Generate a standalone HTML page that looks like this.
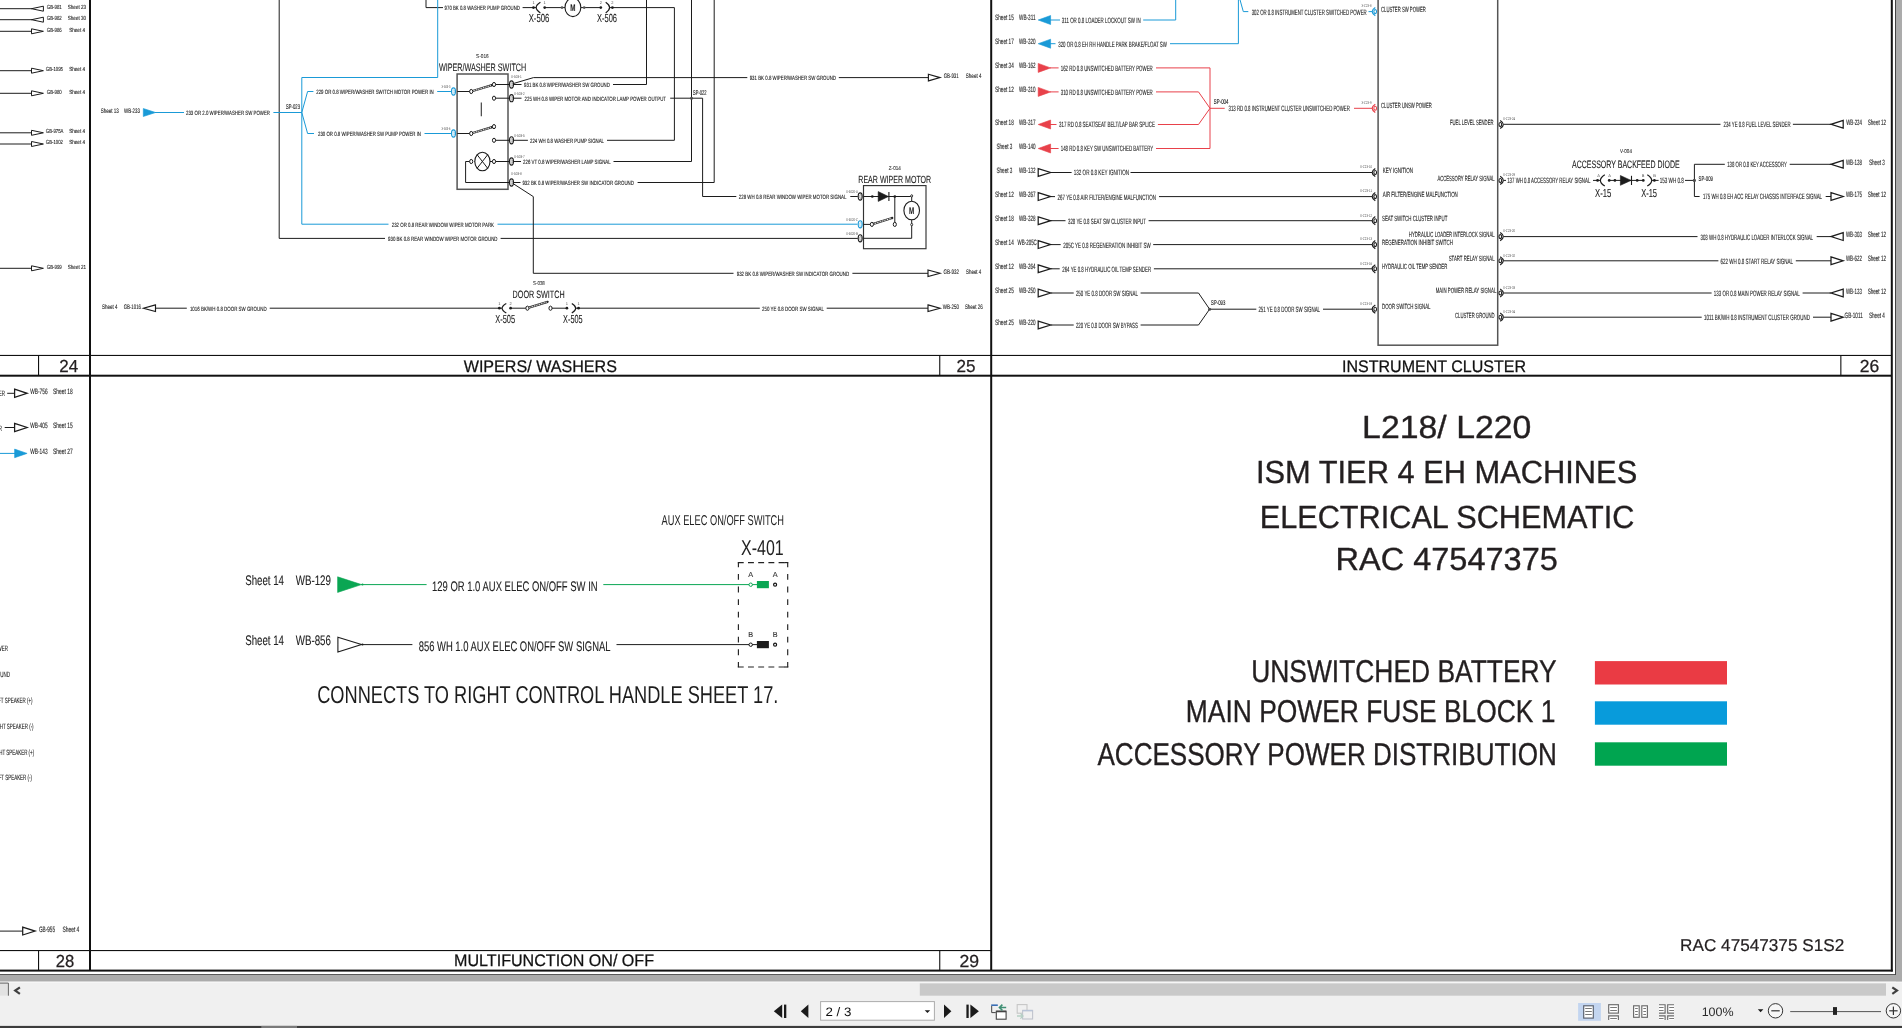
<!DOCTYPE html>
<html lang="en"><head><meta charset="utf-8"><title>L218/ L220 Electrical Schematic RAC 47547375</title>
<style>
html,body{margin:0;padding:0;background:#fff;overflow:hidden}
svg{display:block;font-family:"Liberation Sans",sans-serif;will-change:transform;-webkit-font-smoothing:antialiased;text-rendering:geometricPrecision}
</style></head><body>
<svg width="1902" height="1028" viewBox="0 0 1902 1028">
<rect x="0" y="0" width="1902" height="1028" fill="#fff"/>
<rect x="1896" y="0" width="6" height="982" fill="#ababab"/>
<rect x="0" y="975" width="1902" height="6.8" fill="#ababab"/>
<rect x="1895" y="0" width="1" height="975" fill="#454545"/>
<rect x="0" y="974.1" width="1896" height="0.9" fill="#454545"/>
<rect x="89" y="0" width="2" height="971" fill="#111"/>
<rect x="990.2" y="0" width="2" height="971" fill="#111"/>
<rect x="1890.8" y="0" width="2" height="971.5" fill="#111"/>
<rect x="0" y="374.7" width="1892" height="2.0" fill="#111"/>
<rect x="0" y="969.6" width="1892.8" height="2" fill="#111"/>
<rect x="0" y="354.9" width="1892" height="1.1" fill="#111"/>
<rect x="0" y="950" width="991" height="1.1" fill="#111"/>
<rect x="38" y="355" width="1.1" height="20" fill="#111"/>
<rect x="939.2" y="355" width="1.1" height="20" fill="#111"/>
<rect x="1840.3" y="355" width="1.1" height="20" fill="#111"/>
<rect x="38" y="950" width="1.1" height="20" fill="#111"/>
<rect x="939.2" y="950" width="1.1" height="20" fill="#111"/>
<text x="59.2" y="372.0" font-size="17.4" fill="#231f20" textLength="18.9" lengthAdjust="spacingAndGlyphs" stroke="#231f20" stroke-width="0.25">24</text>
<text x="956.5" y="372.0" font-size="17.4" fill="#231f20" textLength="19.0" lengthAdjust="spacingAndGlyphs" stroke="#231f20" stroke-width="0.25">25</text>
<text x="1859.7" y="372.0" font-size="17.4" fill="#231f20" textLength="19.5" lengthAdjust="spacingAndGlyphs" stroke="#231f20" stroke-width="0.25">26</text>
<text x="55.7" y="967.0" font-size="17.4" fill="#231f20" textLength="18.5" lengthAdjust="spacingAndGlyphs" stroke="#231f20" stroke-width="0.25">28</text>
<text x="959.4" y="967.0" font-size="17.4" fill="#231f20" textLength="19.6" lengthAdjust="spacingAndGlyphs" stroke="#231f20" stroke-width="0.25">29</text>
<text x="463.7" y="371.7" font-size="16.7" fill="#111" textLength="153.3" lengthAdjust="spacingAndGlyphs" stroke="#111" stroke-width="0.25">WIPERS/ WASHERS</text>
<text x="1342.0" y="371.7" font-size="16.7" fill="#111" textLength="184.0" lengthAdjust="spacingAndGlyphs" stroke="#111" stroke-width="0.25">INSTRUMENT CLUSTER</text>
<text x="454.1" y="965.9" font-size="16.7" fill="#111" textLength="199.9" lengthAdjust="spacingAndGlyphs" stroke="#111" stroke-width="0.25">MULTIFUNCTION ON/ OFF</text>
<path d="M0.0 8.7L32.0 8.7" stroke="#1c1c1c" stroke-width="1.0" fill="none"/>
<path d="M43.4 6.2L31.5 8.7L43.4 11.2Z" fill="#fff" stroke="#1c1c1c" stroke-width="1.0"/>
<text x="46.8" y="8.9" font-size="5.9" fill="#1e1e1e" textLength="15.0" lengthAdjust="spacingAndGlyphs" stroke="#1e1e1e" stroke-width="0.12">GB-981</text>
<text x="67.8" y="8.9" font-size="5.9" fill="#1e1e1e" textLength="18.2" lengthAdjust="spacingAndGlyphs" stroke="#1e1e1e" stroke-width="0.12">Sheet 23</text>
<path d="M0.0 19.7L32.0 19.7" stroke="#1c1c1c" stroke-width="1.0" fill="none"/>
<path d="M43.4 17.2L31.5 19.7L43.4 22.2Z" fill="#fff" stroke="#1c1c1c" stroke-width="1.0"/>
<text x="46.8" y="19.9" font-size="5.9" fill="#1e1e1e" textLength="15.0" lengthAdjust="spacingAndGlyphs" stroke="#1e1e1e" stroke-width="0.12">GB-982</text>
<text x="67.8" y="19.9" font-size="5.9" fill="#1e1e1e" textLength="18.2" lengthAdjust="spacingAndGlyphs" stroke="#1e1e1e" stroke-width="0.12">Sheet 30</text>
<path d="M0.0 31.3L32.0 31.3" stroke="#1c1c1c" stroke-width="1.0" fill="none"/>
<path d="M31.5 28.8L43.4 31.3L31.5 33.8Z" fill="#fff" stroke="#1c1c1c" stroke-width="1.0"/>
<text x="46.8" y="31.5" font-size="5.9" fill="#1e1e1e" textLength="15.0" lengthAdjust="spacingAndGlyphs" stroke="#1e1e1e" stroke-width="0.12">GB-986</text>
<text x="69.2" y="31.5" font-size="5.9" fill="#1e1e1e" textLength="15.8" lengthAdjust="spacingAndGlyphs" stroke="#1e1e1e" stroke-width="0.12">Sheet 4</text>
<path d="M0.0 70.7L32.0 70.7" stroke="#1c1c1c" stroke-width="1.0" fill="none"/>
<path d="M31.5 68.2L43.4 70.7L31.5 73.2Z" fill="#fff" stroke="#1c1c1c" stroke-width="1.0"/>
<text x="45.8" y="70.9" font-size="5.9" fill="#1e1e1e" textLength="17.2" lengthAdjust="spacingAndGlyphs" stroke="#1e1e1e" stroke-width="0.12">GB-1095</text>
<text x="69.2" y="70.9" font-size="5.9" fill="#1e1e1e" textLength="15.8" lengthAdjust="spacingAndGlyphs" stroke="#1e1e1e" stroke-width="0.12">Sheet 4</text>
<path d="M0.0 93.3L32.0 93.3" stroke="#1c1c1c" stroke-width="1.0" fill="none"/>
<path d="M31.5 90.8L43.4 93.3L31.5 95.8Z" fill="#fff" stroke="#1c1c1c" stroke-width="1.0"/>
<text x="46.8" y="93.5" font-size="5.9" fill="#1e1e1e" textLength="15.0" lengthAdjust="spacingAndGlyphs" stroke="#1e1e1e" stroke-width="0.12">GB-980</text>
<text x="69.2" y="93.5" font-size="5.9" fill="#1e1e1e" textLength="15.8" lengthAdjust="spacingAndGlyphs" stroke="#1e1e1e" stroke-width="0.12">Sheet 4</text>
<path d="M0.0 132.8L32.0 132.8" stroke="#1c1c1c" stroke-width="1.0" fill="none"/>
<path d="M31.5 130.3L43.4 132.8L31.5 135.3Z" fill="#fff" stroke="#1c1c1c" stroke-width="1.0"/>
<text x="45.8" y="133.0" font-size="5.9" fill="#1e1e1e" textLength="17.6" lengthAdjust="spacingAndGlyphs" stroke="#1e1e1e" stroke-width="0.12">GB-975A</text>
<text x="69.2" y="133.0" font-size="5.9" fill="#1e1e1e" textLength="15.8" lengthAdjust="spacingAndGlyphs" stroke="#1e1e1e" stroke-width="0.12">Sheet 4</text>
<path d="M0.0 144.0L32.0 144.0" stroke="#1c1c1c" stroke-width="1.0" fill="none"/>
<path d="M31.5 141.5L43.4 144.0L31.5 146.5Z" fill="#fff" stroke="#1c1c1c" stroke-width="1.0"/>
<text x="45.8" y="144.2" font-size="5.9" fill="#1e1e1e" textLength="17.2" lengthAdjust="spacingAndGlyphs" stroke="#1e1e1e" stroke-width="0.12">GB-1002</text>
<text x="69.2" y="144.2" font-size="5.9" fill="#1e1e1e" textLength="15.8" lengthAdjust="spacingAndGlyphs" stroke="#1e1e1e" stroke-width="0.12">Sheet 4</text>
<path d="M0.0 268.3L32.0 268.3" stroke="#1c1c1c" stroke-width="1.0" fill="none"/>
<path d="M31.5 265.8L43.4 268.3L31.5 270.8Z" fill="#fff" stroke="#1c1c1c" stroke-width="1.0"/>
<text x="46.8" y="268.5" font-size="5.9" fill="#1e1e1e" textLength="15.0" lengthAdjust="spacingAndGlyphs" stroke="#1e1e1e" stroke-width="0.12">GB-999</text>
<text x="67.8" y="268.5" font-size="5.9" fill="#1e1e1e" textLength="18.2" lengthAdjust="spacingAndGlyphs" stroke="#1e1e1e" stroke-width="0.12">Sheet 21</text>
<path d="M279.2 0.0L279.2 238.4L385.0 238.4" stroke="#1c1c1c" stroke-width="1.0" fill="none" stroke-linejoin="miter"/>
<path d="M500.6 238.4L857.8 238.4" stroke="#1c1c1c" stroke-width="1.0" fill="none"/>
<path d="M426.0 0.0L426.0 7.6L443.0 7.6" stroke="#1c1c1c" stroke-width="1.0" fill="none" stroke-linejoin="miter"/>
<text x="444.6" y="9.9" font-size="6.2" fill="#1e1e1e" textLength="75.3" lengthAdjust="spacingAndGlyphs" stroke="#1e1e1e" stroke-width="0.12">970 BK 0.8 WASHER PUMP GROUND</text>
<path d="M522.6 7.6L533.5 7.6" stroke="#1c1c1c" stroke-width="1.0" fill="none"/>
<text x="388.0" y="240.7" font-size="6.2" fill="#1e1e1e" textLength="109.5" lengthAdjust="spacingAndGlyphs" stroke="#1e1e1e" stroke-width="0.12">930 BK 0.8 REAR WINDOW WIPER MOTOR GROUND</text>
<circle cx="533.5" cy="7.6" r="1.35" fill="#1c1c1c"/>
<path d="M540.4 2.3Q532.0 7.6 540.4 12.9" stroke="#1c1c1c" stroke-width="1.2" fill="none"/>
<circle cx="544.7" cy="7.6" r="1.35" fill="#1c1c1c"/>
<path d="M532.0 7.6L536.1 7.6" stroke="#1c1c1c" stroke-width="1.0" fill="none"/>
<text x="533.5" y="4.4" font-size="4.0" fill="#4a4a4a" text-anchor="middle">1</text>
<text x="544.7" y="4.4" font-size="4.0" fill="#4a4a4a" text-anchor="middle">1</text>
<path d="M544.7 7.6L565.0 7.6" stroke="#1c1c1c" stroke-width="1.0" fill="none"/>
<circle cx="562.0" cy="7.6" r="1.35" fill="#555"/>
<ellipse cx="572.9" cy="7.4" rx="7.9" ry="9.2" fill="#fff" stroke="#1c1c1c" stroke-width="1.1"/>
<text x="570.3" y="11.0" font-size="9.6" fill="#1c1c1c" textLength="5.2" lengthAdjust="spacingAndGlyphs" font-weight="bold" stroke="#1c1c1c" stroke-width="0.1">M</text>
<path d="M581.0 7.6L600.8 7.6" stroke="#1c1c1c" stroke-width="1.0" fill="none"/>
<circle cx="584.2" cy="7.6" r="1.35" fill="#555"/>
<circle cx="600.8" cy="7.6" r="1.35" fill="#1c1c1c"/>
<path d="M605.7 2.3Q613.5 7.6 605.7 12.9" stroke="#1c1c1c" stroke-width="1.2" fill="none"/>
<circle cx="612.4" cy="7.6" r="1.35" fill="#1c1c1c"/>
<path d="M609.8 7.6L613.8 7.6" stroke="#1c1c1c" stroke-width="1.0" fill="none"/>
<text x="600.8" y="4.4" font-size="4.0" fill="#4a4a4a" text-anchor="middle">2</text>
<text x="612.4" y="4.4" font-size="4.0" fill="#4a4a4a" text-anchor="middle">2</text>
<path d="M612.4 7.6L674.4 7.6L674.4 140.3L607.0 140.3" stroke="#1c1c1c" stroke-width="1.0" fill="none" stroke-linejoin="miter"/>
<text x="528.7" y="22.0" font-size="11.7" fill="#1e1e1e" textLength="20.6" lengthAdjust="spacingAndGlyphs" stroke="#1e1e1e" stroke-width="0.1">X-506</text>
<text x="597.0" y="22.0" font-size="11.7" fill="#1e1e1e" textLength="20.0" lengthAdjust="spacingAndGlyphs" stroke="#1e1e1e" stroke-width="0.1">X-506</text>
<path d="M646.5 0.0L646.5 84.5L613.0 84.5" stroke="#1c1c1c" stroke-width="1.0" fill="none" stroke-linejoin="miter"/>
<path d="M691.5 0.0L691.5 161.5L613.5 161.5" stroke="#1c1c1c" stroke-width="1.0" fill="none" stroke-linejoin="miter"/>
<path d="M714.2 0.0L714.2 182.5L637.6 182.5" stroke="#1c1c1c" stroke-width="1.0" fill="none" stroke-linejoin="miter"/>
<text x="100.7" y="112.7" font-size="6.6" fill="#1e1e1e" textLength="18.2" lengthAdjust="spacingAndGlyphs" stroke="#1e1e1e" stroke-width="0.12">Sheet 13</text>
<text x="124.0" y="112.7" font-size="6.6" fill="#1e1e1e" textLength="16.0" lengthAdjust="spacingAndGlyphs" stroke="#1e1e1e" stroke-width="0.12">WB-233</text>
<path d="M143.3 108.5L155.6 112.5L143.3 116.5Z" fill="#1a9ad7" stroke="#1a9ad7" stroke-width="0.6"/>
<path d="M155.0 112.5L184.0 112.5" stroke="#1a9ad7" stroke-width="1.0" fill="none"/>
<text x="186.0" y="114.8" font-size="6.2" fill="#1e1e1e" textLength="84.0" lengthAdjust="spacingAndGlyphs" stroke="#1e1e1e" stroke-width="0.12">233 OR 2.0 WIPER/WASHER SW POWER</text>
<path d="M273.4 112.5L301.8 112.5" stroke="#1a9ad7" stroke-width="1.0" fill="none"/>
<text x="286.0" y="109.3" font-size="6.8" fill="#1e1e1e" textLength="14.0" lengthAdjust="spacingAndGlyphs" stroke="#1e1e1e" stroke-width="0.12">SP-023</text>
<path d="M437.7 0.0L437.7 77.5L301.8 77.5L301.8 224.2L388.5 224.2" stroke="#1a9ad7" stroke-width="1.0" fill="none" stroke-linejoin="miter"/>
<path d="M497.5 224.2L857.5 224.2" stroke="#1a9ad7" stroke-width="1.0" fill="none"/>
<text x="391.7" y="226.5" font-size="6.2" fill="#1e1e1e" textLength="102.3" lengthAdjust="spacingAndGlyphs" stroke="#1e1e1e" stroke-width="0.12">232 OR 0.8 REAR WINDOW WIPER MOTOR PARK</text>
<path d="M301.8 112.5L307.6 91.5L313.4 91.5" stroke="#1a9ad7" stroke-width="1.0" fill="none" stroke-linejoin="miter"/>
<path d="M301.8 112.5L307.6 133.5L314.0 133.5" stroke="#1a9ad7" stroke-width="1.0" fill="none" stroke-linejoin="miter"/>
<text x="316.2" y="93.8" font-size="6.2" fill="#1e1e1e" textLength="117.6" lengthAdjust="spacingAndGlyphs" stroke="#1e1e1e" stroke-width="0.12">229 OR 0.8 WIPER/WASHER SWITCH MOTOR POWER IN</text>
<text x="318.0" y="135.8" font-size="6.2" fill="#1e1e1e" textLength="103.0" lengthAdjust="spacingAndGlyphs" stroke="#1e1e1e" stroke-width="0.12">230 OR 0.8 WIPER/WASHER SW PUMP POWER IN</text>
<path d="M437.2 91.5L451.0 91.5" stroke="#1a9ad7" stroke-width="1.0" fill="none"/>
<path d="M424.5 133.5L451.0 133.5" stroke="#1a9ad7" stroke-width="1.0" fill="none"/>
<text x="476.1" y="57.6" font-size="5.6" fill="#444" textLength="12.6" lengthAdjust="spacingAndGlyphs" stroke="#444" stroke-width="0.12">S-016</text>
<text x="438.9" y="71.0" font-size="10.8" fill="#222" textLength="87.3" lengthAdjust="spacingAndGlyphs" stroke="#222" stroke-width="0.1">WIPER/WASHER SWITCH</text>
<rect x="457.1" y="74" width="50.9" height="115.3" fill="none" stroke="#555" stroke-width="1.5"/>
<text x="441.5" y="87.8" font-size="4.0" fill="#4a4a4a" textLength="9.0" lengthAdjust="spacingAndGlyphs">X-503-3</text>
<text x="441.5" y="129.8" font-size="4.0" fill="#4a4a4a" textLength="9.0" lengthAdjust="spacingAndGlyphs">X-503-6</text>
<path d="M457.2 91.5L470.0 91.5" stroke="#1c1c1c" stroke-width="1.0" fill="none"/>
<path d="M472.6 91.0L492.0 85.2" stroke="#303030" stroke-width="2.3" fill="none"/>
<path d="M472.6 91.0L492.0 85.2" stroke="#fff" stroke-width="1.0" stroke-dasharray="1.1 0.7" fill="none"/>
<circle cx="492.0" cy="85.2" r="1.15" fill="#262626"/>
<path d="M495.0 84.5L509.0 84.5" stroke="#1c1c1c" stroke-width="1.0" fill="none"/>
<path d="M495.0 98.2L509.0 98.2" stroke="#1c1c1c" stroke-width="1.0" fill="none"/>
<ellipse cx="471.2" cy="91.5" rx="1.55" ry="2.1" fill="#fff" stroke="#1c1c1c" stroke-width="1.0"/>
<ellipse cx="494.0" cy="84.5" rx="1.55" ry="2.1" fill="#fff" stroke="#1c1c1c" stroke-width="1.0"/>
<ellipse cx="494.0" cy="98.2" rx="1.55" ry="2.1" fill="#fff" stroke="#1c1c1c" stroke-width="1.0"/>
<path d="M481.3 102.4L481.3 116.3" stroke="#333" stroke-width="1.1" fill="none"/>
<path d="M457.2 133.5L470.0 133.5" stroke="#1c1c1c" stroke-width="1.0" fill="none"/>
<path d="M472.6 133.0L492.0 127.2" stroke="#303030" stroke-width="2.3" fill="none"/>
<path d="M472.6 133.0L492.0 127.2" stroke="#fff" stroke-width="1.0" stroke-dasharray="1.1 0.7" fill="none"/>
<circle cx="492.0" cy="127.2" r="1.15" fill="#262626"/>
<path d="M495.0 140.3L509.0 140.3" stroke="#1c1c1c" stroke-width="1.0" fill="none"/>
<ellipse cx="471.2" cy="133.5" rx="1.55" ry="2.1" fill="#fff" stroke="#1c1c1c" stroke-width="1.0"/>
<ellipse cx="494.0" cy="126.6" rx="1.55" ry="2.1" fill="#fff" stroke="#1c1c1c" stroke-width="1.0"/>
<ellipse cx="494.0" cy="140.3" rx="1.55" ry="2.1" fill="#fff" stroke="#1c1c1c" stroke-width="1.0"/>
<path d="M469.8 161.5L465.6 161.5L465.6 182.5L509.0 182.5" stroke="#1c1c1c" stroke-width="1.0" fill="none" stroke-linejoin="miter"/>
<path d="M474.5 161.5L492.5 161.5" stroke="#1c1c1c" stroke-width="1.0" fill="none"/>
<path d="M495.0 161.5L509.0 161.5" stroke="#1c1c1c" stroke-width="1.0" fill="none"/>
<ellipse cx="482.4" cy="161.5" rx="7.6" ry="9.3" fill="#fff" stroke="#1c1c1c" stroke-width="1.1"/>
<path d="M477.2 154.8L487.6 168.2" stroke="#1c1c1c" stroke-width="1.0" fill="none"/>
<path d="M487.6 154.8L477.2 168.2" stroke="#1c1c1c" stroke-width="1.0" fill="none"/>
<ellipse cx="471.2" cy="161.5" rx="1.55" ry="2.1" fill="#fff" stroke="#1c1c1c" stroke-width="1.0"/>
<ellipse cx="494.0" cy="161.5" rx="1.55" ry="2.1" fill="#fff" stroke="#1c1c1c" stroke-width="1.0"/>
<ellipse cx="453.5" cy="91.5" rx="2.0" ry="3.6" fill="#fff" stroke="#1a9ad7" stroke-width="1.1"/>
<ellipse cx="453.8" cy="91.5" rx="0.8" ry="2.0" fill="none" stroke="#1a9ad7" stroke-width="0.55" stroke-opacity="0.6"/>
<ellipse cx="453.5" cy="133.5" rx="2.0" ry="3.6" fill="#fff" stroke="#1a9ad7" stroke-width="1.1"/>
<ellipse cx="453.8" cy="133.5" rx="0.8" ry="2.0" fill="none" stroke="#1a9ad7" stroke-width="0.55" stroke-opacity="0.6"/>
<path d="M514.0 84.5L521.5 84.5" stroke="#1c1c1c" stroke-width="1.0" fill="none"/>
<path d="M512.5 83.8L533.5 77.6L747.3 77.6" stroke="#1c1c1c" stroke-width="1.0" fill="none" stroke-linejoin="miter"/>
<text x="524.1" y="87.0" font-size="6.2" fill="#1e1e1e" textLength="85.8" lengthAdjust="spacingAndGlyphs" stroke="#1e1e1e" stroke-width="0.12">931 BK 0.8 WIPER/WASHER SW GROUND</text>
<path d="M514.0 98.2L521.5 98.2" stroke="#1c1c1c" stroke-width="1.0" fill="none"/>
<text x="524.5" y="100.6" font-size="6.2" fill="#1e1e1e" textLength="141.5" lengthAdjust="spacingAndGlyphs" stroke="#1e1e1e" stroke-width="0.12">225 WH 0.8 WIPER MOTOR AND INDICATOR LAMP POWER OUTPUT</text>
<path d="M670.2 98.2L702.6 98.2L702.6 196.5L736.3 196.5" stroke="#1c1c1c" stroke-width="1.0" fill="none" stroke-linejoin="miter"/>
<circle cx="691.5" cy="98.2" r="1.5" fill="#4a4a4a"/>
<text x="693.0" y="95.3" font-size="6.8" fill="#1e1e1e" textLength="13.6" lengthAdjust="spacingAndGlyphs" stroke="#1e1e1e" stroke-width="0.12">SP-022</text>
<path d="M514.0 140.3L527.9 140.3" stroke="#1c1c1c" stroke-width="1.0" fill="none"/>
<text x="530.0" y="142.7" font-size="6.2" fill="#1e1e1e" textLength="74.0" lengthAdjust="spacingAndGlyphs" stroke="#1e1e1e" stroke-width="0.12">224 WH 0.8 WASHER PUMP SIGNAL</text>
<path d="M514.0 161.5L521.0 161.5" stroke="#1c1c1c" stroke-width="1.0" fill="none"/>
<text x="523.0" y="163.9" font-size="6.2" fill="#1e1e1e" textLength="87.7" lengthAdjust="spacingAndGlyphs" stroke="#1e1e1e" stroke-width="0.12">226 VT 0.8 WIPER/WASHER LAMP SIGNAL</text>
<path d="M514.0 182.5L520.5 182.5" stroke="#1c1c1c" stroke-width="1.0" fill="none"/>
<text x="522.4" y="184.9" font-size="6.2" fill="#1e1e1e" textLength="111.5" lengthAdjust="spacingAndGlyphs" stroke="#1e1e1e" stroke-width="0.12">932 BK 0.8 WIPER/WASHER SW INDICATOR GROUND</text>
<path d="M512.5 183.2L533.3 196.6L533.3 273.3L733.5 273.3" stroke="#1c1c1c" stroke-width="1.0" fill="none" stroke-linejoin="miter"/>
<ellipse cx="511.5" cy="84.5" rx="2.0" ry="3.6" fill="#fff" stroke="#1c1c1c" stroke-width="1.1"/>
<ellipse cx="511.8" cy="84.5" rx="0.8" ry="2.0" fill="none" stroke="#1c1c1c" stroke-width="0.55" stroke-opacity="0.6"/>
<ellipse cx="511.5" cy="98.2" rx="2.0" ry="3.6" fill="#fff" stroke="#1c1c1c" stroke-width="1.1"/>
<ellipse cx="511.8" cy="98.2" rx="0.8" ry="2.0" fill="none" stroke="#1c1c1c" stroke-width="0.55" stroke-opacity="0.6"/>
<ellipse cx="511.5" cy="140.3" rx="2.0" ry="3.6" fill="#fff" stroke="#1c1c1c" stroke-width="1.1"/>
<ellipse cx="511.8" cy="140.3" rx="0.8" ry="2.0" fill="none" stroke="#1c1c1c" stroke-width="0.55" stroke-opacity="0.6"/>
<ellipse cx="511.5" cy="161.5" rx="2.0" ry="3.6" fill="#fff" stroke="#1c1c1c" stroke-width="1.1"/>
<ellipse cx="511.8" cy="161.5" rx="0.8" ry="2.0" fill="none" stroke="#1c1c1c" stroke-width="0.55" stroke-opacity="0.6"/>
<ellipse cx="511.5" cy="182.5" rx="2.0" ry="3.6" fill="#fff" stroke="#1c1c1c" stroke-width="1.1"/>
<ellipse cx="511.8" cy="182.5" rx="0.8" ry="2.0" fill="none" stroke="#1c1c1c" stroke-width="0.55" stroke-opacity="0.6"/>
<text x="511.0" y="77.7" font-size="4.0" fill="#4a4a4a" textLength="10.8" lengthAdjust="spacingAndGlyphs">X-503-1</text>
<text x="514.0" y="94.8" font-size="4.0" fill="#4a4a4a" textLength="10.8" lengthAdjust="spacingAndGlyphs">X-503-2</text>
<text x="514.0" y="136.8" font-size="4.0" fill="#4a4a4a" textLength="10.8" lengthAdjust="spacingAndGlyphs">X-503-5</text>
<text x="514.0" y="157.9" font-size="4.0" fill="#4a4a4a" textLength="10.8" lengthAdjust="spacingAndGlyphs">X-503-7</text>
<text x="511.0" y="175.4" font-size="4.0" fill="#4a4a4a" textLength="10.8" lengthAdjust="spacingAndGlyphs">X-503-8</text>
<text x="749.7" y="80.0" font-size="6.2" fill="#1e1e1e" textLength="86.3" lengthAdjust="spacingAndGlyphs" stroke="#1e1e1e" stroke-width="0.12">931 BK 0.8 WIPER/WASHER SW GROUND</text>
<path d="M838.8 77.6L928.4 77.6" stroke="#1c1c1c" stroke-width="1.0" fill="none"/>
<path d="M928.4 74.3L940.0 77.6L928.4 80.9Z" fill="#fff" stroke="#1c1c1c" stroke-width="1.15"/>
<text x="943.7" y="78.0" font-size="6.6" fill="#1e1e1e" textLength="15.0" lengthAdjust="spacingAndGlyphs" stroke="#1e1e1e" stroke-width="0.12">GB-931</text>
<text x="965.8" y="78.0" font-size="6.6" fill="#1e1e1e" textLength="15.7" lengthAdjust="spacingAndGlyphs" stroke="#1e1e1e" stroke-width="0.12">Sheet 4</text>
<text x="738.8" y="198.9" font-size="6.2" fill="#1e1e1e" textLength="107.7" lengthAdjust="spacingAndGlyphs" stroke="#1e1e1e" stroke-width="0.12">228 WH 0.8 REAR WINDOW WIPER MOTOR SIGNAL</text>
<path d="M850.3 196.5L857.8 196.5" stroke="#1c1c1c" stroke-width="1.0" fill="none"/>
<text x="888.8" y="169.5" font-size="5.6" fill="#444" textLength="12.0" lengthAdjust="spacingAndGlyphs" stroke="#444" stroke-width="0.12">Z-014</text>
<text x="858.3" y="182.6" font-size="10.3" fill="#222" textLength="72.9" lengthAdjust="spacingAndGlyphs" stroke="#222" stroke-width="0.1">REAR WIPER MOTOR</text>
<rect x="863.5" y="185.6" width="62.5" height="63.1" fill="none" stroke="#333" stroke-width="1.15"/>
<path d="M863.5 196.5L911.7 196.5" stroke="#1c1c1c" stroke-width="1.0" fill="none"/>
<circle cx="872.3" cy="196.5" r="1.35" fill="#1c1c1c"/>
<path d="M878.2 191.6L888.4 196.5L878.2 201.4Z" fill="#1c1c1c" stroke="#1c1c1c" stroke-width="0.6"/>
<path d="M888.9 192.0L888.9 201.0" stroke="#1c1c1c" stroke-width="1.1" fill="none"/>
<circle cx="894.8" cy="196.5" r="1.35" fill="#1c1c1c"/>
<path d="M894.8 196.5L894.8 222.5" stroke="#1c1c1c" stroke-width="1.0" fill="none"/>
<path d="M911.7 196.5L911.7 201.2" stroke="#1c1c1c" stroke-width="1.0" fill="none"/>
<ellipse cx="911.7" cy="210.5" rx="7.8" ry="9.3" fill="#fff" stroke="#1c1c1c" stroke-width="1.1"/>
<text x="909.1" y="213.9" font-size="9.6" fill="#1c1c1c" textLength="5.2" lengthAdjust="spacingAndGlyphs" font-weight="bold" stroke="#1c1c1c" stroke-width="0.1">M</text>
<path d="M911.7 219.8L911.7 238.3L863.5 238.3" stroke="#1c1c1c" stroke-width="1.0" fill="none" stroke-linejoin="miter"/>
<ellipse cx="911.7" cy="195.9" rx="1.0" ry="1.2" fill="#fff" stroke="#333" stroke-width="1.0"/>
<ellipse cx="911.7" cy="224.6" rx="1.0" ry="1.2" fill="#fff" stroke="#333" stroke-width="1.0"/>
<path d="M863.5 224.4L870.4 224.4" stroke="#1c1c1c" stroke-width="1.0" fill="none"/>
<path d="M873.3 223.9L892.2 218.0" stroke="#303030" stroke-width="2.3" fill="none"/>
<path d="M873.3 223.9L892.2 218.0" stroke="#fff" stroke-width="1.0" stroke-dasharray="1.1 0.7" fill="none"/>
<circle cx="892.2" cy="218.0" r="1.15" fill="#262626"/>
<ellipse cx="871.9" cy="224.4" rx="1.55" ry="2.1" fill="#fff" stroke="#1c1c1c" stroke-width="1.0"/>
<ellipse cx="894.8" cy="224.4" rx="1.55" ry="2.1" fill="#fff" stroke="#1c1c1c" stroke-width="1.0"/>
<ellipse cx="860.2" cy="196.5" rx="2.0" ry="3.6" fill="#fff" stroke="#1c1c1c" stroke-width="1.1"/>
<ellipse cx="860.5" cy="196.5" rx="0.8" ry="2.0" fill="none" stroke="#1c1c1c" stroke-width="0.55" stroke-opacity="0.6"/>
<ellipse cx="860.2" cy="224.3" rx="2.0" ry="3.6" fill="#fff" stroke="#1a9ad7" stroke-width="1.1"/>
<ellipse cx="860.5" cy="224.3" rx="0.8" ry="2.0" fill="none" stroke="#1a9ad7" stroke-width="0.55" stroke-opacity="0.6"/>
<ellipse cx="860.2" cy="238.3" rx="2.0" ry="3.6" fill="#fff" stroke="#1c1c1c" stroke-width="1.1"/>
<ellipse cx="860.5" cy="238.3" rx="0.8" ry="2.0" fill="none" stroke="#1c1c1c" stroke-width="0.55" stroke-opacity="0.6"/>
<text x="846.0" y="192.7" font-size="4.0" fill="#4a4a4a" textLength="12.0" lengthAdjust="spacingAndGlyphs">X-5020-A</text>
<text x="846.0" y="220.7" font-size="4.0" fill="#4a4a4a" textLength="12.0" lengthAdjust="spacingAndGlyphs">X-5020-C</text>
<text x="846.0" y="234.7" font-size="4.0" fill="#4a4a4a" textLength="12.0" lengthAdjust="spacingAndGlyphs">X-5020-B</text>
<text x="736.7" y="275.7" font-size="6.2" fill="#1e1e1e" textLength="112.5" lengthAdjust="spacingAndGlyphs" stroke="#1e1e1e" stroke-width="0.12">932 BK 0.8 WIPER/WASHER SW INDICATOR GROUND</text>
<path d="M852.4 273.3L928.0 273.3" stroke="#1c1c1c" stroke-width="1.0" fill="none"/>
<path d="M928.0 270.0L940.0 273.3L928.0 276.6Z" fill="#fff" stroke="#1c1c1c" stroke-width="1.15"/>
<text x="943.4" y="273.7" font-size="6.6" fill="#1e1e1e" textLength="15.6" lengthAdjust="spacingAndGlyphs" stroke="#1e1e1e" stroke-width="0.12">GB-932</text>
<text x="966.0" y="273.7" font-size="6.6" fill="#1e1e1e" textLength="15.3" lengthAdjust="spacingAndGlyphs" stroke="#1e1e1e" stroke-width="0.12">Sheet 4</text>
<text x="101.9" y="308.6" font-size="6.6" fill="#1e1e1e" textLength="15.5" lengthAdjust="spacingAndGlyphs" stroke="#1e1e1e" stroke-width="0.12">Sheet 4</text>
<text x="123.7" y="308.6" font-size="6.6" fill="#1e1e1e" textLength="17.3" lengthAdjust="spacingAndGlyphs" stroke="#1e1e1e" stroke-width="0.12">GB-1016</text>
<path d="M155.5 304.9L143.5 308.2L155.5 311.5Z" fill="#fff" stroke="#1c1c1c" stroke-width="1.15"/>
<path d="M155.5 308.2L186.8 308.2" stroke="#1c1c1c" stroke-width="1.0" fill="none"/>
<text x="189.9" y="310.6" font-size="6.2" fill="#1e1e1e" textLength="76.7" lengthAdjust="spacingAndGlyphs" stroke="#1e1e1e" stroke-width="0.12">1016 BK/WH 0.8 DOOR SW GROUND</text>
<path d="M269.7 308.2L499.4 308.2" stroke="#1c1c1c" stroke-width="1.0" fill="none"/>
<circle cx="499.4" cy="308.2" r="1.35" fill="#1c1c1c"/>
<path d="M506.3 303.4Q497.9 308.2 506.3 313.0" stroke="#1c1c1c" stroke-width="1.2" fill="none"/>
<circle cx="510.6" cy="308.2" r="1.35" fill="#1c1c1c"/>
<path d="M497.9 308.2L502.0 308.2" stroke="#1c1c1c" stroke-width="1.0" fill="none"/>
<text x="499.4" y="305.0" font-size="4.0" fill="#4a4a4a" text-anchor="middle">1</text>
<text x="510.6" y="305.0" font-size="4.0" fill="#4a4a4a" text-anchor="middle">2</text>
<path d="M510.6 308.2L526.0 308.2" stroke="#1c1c1c" stroke-width="1.0" fill="none"/>
<path d="M528.8 307.7L547.6 301.8" stroke="#303030" stroke-width="2.3" fill="none"/>
<path d="M528.8 307.7L547.6 301.8" stroke="#fff" stroke-width="1.0" stroke-dasharray="1.1 0.7" fill="none"/>
<circle cx="547.6" cy="301.8" r="1.15" fill="#262626"/>
<ellipse cx="527.4" cy="308.2" rx="1.55" ry="2.1" fill="#fff" stroke="#1c1c1c" stroke-width="1.0"/>
<ellipse cx="550.5" cy="308.2" rx="1.55" ry="2.1" fill="#fff" stroke="#1c1c1c" stroke-width="1.0"/>
<path d="M552.0 308.2L566.9 308.2" stroke="#1c1c1c" stroke-width="1.0" fill="none"/>
<circle cx="566.9" cy="308.2" r="1.35" fill="#1c1c1c"/>
<path d="M571.8 303.4Q579.6 308.2 571.8 313.0" stroke="#1c1c1c" stroke-width="1.2" fill="none"/>
<circle cx="578.5" cy="308.2" r="1.35" fill="#1c1c1c"/>
<path d="M575.9 308.2L579.9 308.2" stroke="#1c1c1c" stroke-width="1.0" fill="none"/>
<text x="566.9" y="305.0" font-size="4.0" fill="#4a4a4a" text-anchor="middle">1</text>
<text x="578.5" y="305.0" font-size="4.0" fill="#4a4a4a" text-anchor="middle">1</text>
<path d="M579.0 308.2L759.8 308.2" stroke="#1c1c1c" stroke-width="1.0" fill="none"/>
<text x="533.0" y="284.9" font-size="5.6" fill="#444" textLength="11.8" lengthAdjust="spacingAndGlyphs" stroke="#444" stroke-width="0.12">S-038</text>
<text x="512.6" y="298.0" font-size="10.6" fill="#222" textLength="52.1" lengthAdjust="spacingAndGlyphs" stroke="#222" stroke-width="0.1">DOOR SWITCH</text>
<text x="495.3" y="322.6" font-size="11.7" fill="#1e1e1e" textLength="19.8" lengthAdjust="spacingAndGlyphs" stroke="#1e1e1e" stroke-width="0.1">X-505</text>
<text x="563.1" y="322.6" font-size="11.7" fill="#1e1e1e" textLength="19.5" lengthAdjust="spacingAndGlyphs" stroke="#1e1e1e" stroke-width="0.1">X-505</text>
<text x="762.0" y="310.6" font-size="6.2" fill="#1e1e1e" textLength="62.0" lengthAdjust="spacingAndGlyphs" stroke="#1e1e1e" stroke-width="0.12">250 YE 0.8 DOOR SW SIGNAL</text>
<path d="M826.7 308.2L928.0 308.2" stroke="#1c1c1c" stroke-width="1.0" fill="none"/>
<path d="M928.0 304.9L940.0 308.2L928.0 311.5Z" fill="#fff" stroke="#1c1c1c" stroke-width="1.15"/>
<text x="942.8" y="308.7" font-size="6.6" fill="#1e1e1e" textLength="16.2" lengthAdjust="spacingAndGlyphs" stroke="#1e1e1e" stroke-width="0.12">WB-250</text>
<text x="964.9" y="308.7" font-size="6.6" fill="#1e1e1e" textLength="17.9" lengthAdjust="spacingAndGlyphs" stroke="#1e1e1e" stroke-width="0.12">Sheet 26</text>
<rect x="1378.1" y="-5" width="119.6" height="350.2" fill="none" stroke="#555" stroke-width="1.5"/>
<text x="995.1" y="20.4" font-size="7.8" fill="#1e1e1e" textLength="18.7" lengthAdjust="spacingAndGlyphs" stroke="#1e1e1e" stroke-width="0.12">Sheet 15</text>
<text x="1019.0" y="20.4" font-size="7.8" fill="#1e1e1e" textLength="16.5" lengthAdjust="spacingAndGlyphs" stroke="#1e1e1e" stroke-width="0.12">WB-311</text>
<path d="M1050.6 15.5L1038.2 20.0L1050.6 24.5Z" fill="#1a9ad7" stroke="#1a9ad7" stroke-width="0.6"/>
<path d="M1050.0 20.0L1060.0 20.0" stroke="#1a9ad7" stroke-width="1.0" fill="none"/>
<text x="1061.8" y="22.9" font-size="7.7" fill="#1e1e1e" textLength="78.8" lengthAdjust="spacingAndGlyphs" stroke="#1e1e1e" stroke-width="0.12">311 OR 0.8 LOADER LOCKOUT SW IN</text>
<path d="M1143.2 20.0L1175.7 20.0L1175.7 0.0" stroke="#1a9ad7" stroke-width="1.0" fill="none" stroke-linejoin="miter"/>
<text x="995.1" y="44.1" font-size="7.8" fill="#1e1e1e" textLength="18.7" lengthAdjust="spacingAndGlyphs" stroke="#1e1e1e" stroke-width="0.12">Sheet 17</text>
<text x="1019.0" y="44.1" font-size="7.8" fill="#1e1e1e" textLength="16.5" lengthAdjust="spacingAndGlyphs" stroke="#1e1e1e" stroke-width="0.12">WB-320</text>
<path d="M1050.6 39.2L1038.2 43.7L1050.6 48.2Z" fill="#1a9ad7" stroke="#1a9ad7" stroke-width="0.6"/>
<path d="M1050.0 43.7L1055.5 43.7" stroke="#1a9ad7" stroke-width="1.0" fill="none"/>
<text x="1058.2" y="46.6" font-size="7.7" fill="#1e1e1e" textLength="108.7" lengthAdjust="spacingAndGlyphs" stroke="#1e1e1e" stroke-width="0.12">320 OR 0.8 EH RH HANDLE PARK BRAKE/FLOAT SW</text>
<path d="M1170.0 43.7L1238.4 43.7L1238.4 0.0" stroke="#1a9ad7" stroke-width="1.0" fill="none" stroke-linejoin="miter"/>
<path d="M1238.4 -6.0L1243.3 11.6L1248.3 11.6" stroke="#1a9ad7" stroke-width="1.0" fill="none" stroke-linejoin="miter"/>
<text x="1251.7" y="14.5" font-size="7.7" fill="#1e1e1e" textLength="115.0" lengthAdjust="spacingAndGlyphs" stroke="#1e1e1e" stroke-width="0.12">302 OR 0.8 INSTRUMENT CLUSTER SWITCHED POWER</text>
<path d="M1368.5 11.6L1372.0 11.6" stroke="#1a9ad7" stroke-width="1.0" fill="none"/>
<path d="M1375.3 7.5Q1369.0 11.6 1375.3 15.7" fill="none" stroke="#1a9ad7" stroke-width="1.2"/>
<ellipse cx="1375.2" cy="11.6" rx="1.35" ry="2.0" fill="#fff" stroke="#1a9ad7" stroke-width="1.05"/>
<text x="1361.4" y="7.3" font-size="4.0" fill="#4a4a4a" textLength="10.1" lengthAdjust="spacingAndGlyphs">X-C23-8</text>
<text x="1381.0" y="12.1" font-size="7.5" fill="#1e1e1e" textLength="44.8" lengthAdjust="spacingAndGlyphs" stroke="#1e1e1e" stroke-width="0.12">CLUSTER SW POWER</text>
<text x="995.1" y="68.3" font-size="7.8" fill="#1e1e1e" textLength="18.7" lengthAdjust="spacingAndGlyphs" stroke="#1e1e1e" stroke-width="0.12">Sheet 34</text>
<text x="1019.0" y="68.3" font-size="7.8" fill="#1e1e1e" textLength="16.5" lengthAdjust="spacingAndGlyphs" stroke="#1e1e1e" stroke-width="0.12">WB-162</text>
<path d="M1038.2 63.4L1050.6 67.9L1038.2 72.4Z" fill="#e8414a" stroke="#e8414a" stroke-width="0.6"/>
<path d="M1050.0 67.9L1058.6 67.9" stroke="#e8414a" stroke-width="1.0" fill="none"/>
<text x="1060.7" y="70.8" font-size="7.7" fill="#1e1e1e" textLength="92.1" lengthAdjust="spacingAndGlyphs" stroke="#1e1e1e" stroke-width="0.12">162 RD 0.8 UNSWITCHED BATTERY POWER</text>
<text x="995.1" y="92.3" font-size="7.8" fill="#1e1e1e" textLength="18.7" lengthAdjust="spacingAndGlyphs" stroke="#1e1e1e" stroke-width="0.12">Sheet 12</text>
<text x="1019.0" y="92.3" font-size="7.8" fill="#1e1e1e" textLength="16.5" lengthAdjust="spacingAndGlyphs" stroke="#1e1e1e" stroke-width="0.12">WB-310</text>
<path d="M1038.2 87.4L1050.6 91.9L1038.2 96.4Z" fill="#e8414a" stroke="#e8414a" stroke-width="0.6"/>
<path d="M1050.0 91.9L1058.6 91.9" stroke="#e8414a" stroke-width="1.0" fill="none"/>
<text x="1060.7" y="94.8" font-size="7.7" fill="#1e1e1e" textLength="92.1" lengthAdjust="spacingAndGlyphs" stroke="#1e1e1e" stroke-width="0.12">310 RD 0.8 UNSWITCHED BATTERY POWER</text>
<text x="995.1" y="124.9" font-size="7.8" fill="#1e1e1e" textLength="18.7" lengthAdjust="spacingAndGlyphs" stroke="#1e1e1e" stroke-width="0.12">Sheet 18</text>
<text x="1019.0" y="124.9" font-size="7.8" fill="#1e1e1e" textLength="16.5" lengthAdjust="spacingAndGlyphs" stroke="#1e1e1e" stroke-width="0.12">WB-317</text>
<path d="M1050.6 120.0L1038.2 124.5L1050.6 129.0Z" fill="#e8414a" stroke="#e8414a" stroke-width="0.6"/>
<path d="M1050.0 124.5L1056.5 124.5" stroke="#e8414a" stroke-width="1.0" fill="none"/>
<text x="1059.0" y="127.4" font-size="7.7" fill="#1e1e1e" textLength="96.0" lengthAdjust="spacingAndGlyphs" stroke="#1e1e1e" stroke-width="0.12">317 RD 0.8 SEAT/SEAT BELT/LAP BAR SPLICE</text>
<text x="996.4" y="148.9" font-size="7.8" fill="#1e1e1e" textLength="16.0" lengthAdjust="spacingAndGlyphs" stroke="#1e1e1e" stroke-width="0.12">Sheet 3</text>
<text x="1019.0" y="148.9" font-size="7.8" fill="#1e1e1e" textLength="16.5" lengthAdjust="spacingAndGlyphs" stroke="#1e1e1e" stroke-width="0.12">WB-140</text>
<path d="M1050.6 144.0L1038.2 148.5L1050.6 153.0Z" fill="#e8414a" stroke="#e8414a" stroke-width="0.6"/>
<path d="M1050.0 148.5L1058.6 148.5" stroke="#e8414a" stroke-width="1.0" fill="none"/>
<text x="1060.7" y="151.4" font-size="7.7" fill="#1e1e1e" textLength="92.5" lengthAdjust="spacingAndGlyphs" stroke="#1e1e1e" stroke-width="0.12">148 RD 0.8 KEY SW UNSWITCHED BATTERY</text>
<path d="M1156.0 67.9L1210.0 67.9L1210.0 148.5L1156.0 148.5" stroke="#e8414a" stroke-width="1.0" fill="none" stroke-linejoin="miter"/>
<path d="M1156.0 91.9L1198.5 91.9L1210.0 108.3L1198.5 124.5L1157.9 124.5" stroke="#e8414a" stroke-width="1.0" fill="none" stroke-linejoin="miter"/>
<path d="M1210.0 108.3L1224.7 108.3" stroke="#e8414a" stroke-width="1.0" fill="none"/>
<text x="1213.8" y="104.3" font-size="6.8" fill="#1e1e1e" textLength="14.7" lengthAdjust="spacingAndGlyphs" stroke="#1e1e1e" stroke-width="0.12">SP-004</text>
<text x="1228.5" y="111.2" font-size="7.7" fill="#1e1e1e" textLength="121.4" lengthAdjust="spacingAndGlyphs" stroke="#1e1e1e" stroke-width="0.12">313 RD 0.8 INSTRUMENT CLUSTER UNSWITCHED POWER</text>
<path d="M1354.0 108.3L1372.0 108.3" stroke="#e8414a" stroke-width="1.0" fill="none"/>
<path d="M1375.3 104.2Q1369.0 108.3 1375.3 112.4" fill="none" stroke="#e8414a" stroke-width="1.2"/>
<ellipse cx="1375.2" cy="108.3" rx="1.35" ry="2.0" fill="#fff" stroke="#e8414a" stroke-width="1.05"/>
<text x="1361.4" y="104.0" font-size="4.0" fill="#4a4a4a" textLength="10.1" lengthAdjust="spacingAndGlyphs">X-C23-9</text>
<text x="1381.0" y="108.4" font-size="7.5" fill="#1e1e1e" textLength="50.9" lengthAdjust="spacingAndGlyphs" stroke="#1e1e1e" stroke-width="0.12">CLUSTER UNSW POWER</text>
<text x="996.4" y="172.9" font-size="7.8" fill="#1e1e1e" textLength="16.0" lengthAdjust="spacingAndGlyphs" stroke="#1e1e1e" stroke-width="0.12">Sheet 3</text>
<text x="1019.0" y="172.9" font-size="7.8" fill="#1e1e1e" textLength="16.5" lengthAdjust="spacingAndGlyphs" stroke="#1e1e1e" stroke-width="0.12">WB-132</text>
<path d="M1038.2 168.6L1050.6 172.5L1038.2 176.4Z" fill="#fff" stroke="#1c1c1c" stroke-width="1.25"/>
<path d="M1050.6 172.5L1071.6 172.5" stroke="#1c1c1c" stroke-width="1.0" fill="none"/>
<text x="1073.7" y="175.4" font-size="7.7" fill="#1e1e1e" textLength="55.3" lengthAdjust="spacingAndGlyphs" stroke="#1e1e1e" stroke-width="0.12">132 OR 0.8 KEY IGNITION</text>
<path d="M1130.5 172.5L1372.0 172.5" stroke="#1c1c1c" stroke-width="1.0" fill="none"/>
<path d="M1375.3 168.4Q1369.0 172.5 1375.3 176.6" fill="none" stroke="#1c1c1c" stroke-width="1.2"/>
<ellipse cx="1375.2" cy="172.5" rx="1.35" ry="2.0" fill="#fff" stroke="#1c1c1c" stroke-width="1.05"/>
<text x="1360.0" y="168.3" font-size="4.0" fill="#4a4a4a" textLength="12.0" lengthAdjust="spacingAndGlyphs">X-C23-10</text>
<text x="1382.7" y="172.8" font-size="7.5" fill="#1e1e1e" textLength="30.3" lengthAdjust="spacingAndGlyphs" stroke="#1e1e1e" stroke-width="0.12">KEY IGNITION</text>
<text x="995.1" y="197.0" font-size="7.8" fill="#1e1e1e" textLength="18.7" lengthAdjust="spacingAndGlyphs" stroke="#1e1e1e" stroke-width="0.12">Sheet 12</text>
<text x="1019.0" y="197.0" font-size="7.8" fill="#1e1e1e" textLength="16.5" lengthAdjust="spacingAndGlyphs" stroke="#1e1e1e" stroke-width="0.12">WB-267</text>
<path d="M1038.2 192.7L1050.6 196.6L1038.2 200.5Z" fill="#fff" stroke="#1c1c1c" stroke-width="1.25"/>
<path d="M1050.6 196.6L1055.0 196.6" stroke="#1c1c1c" stroke-width="1.0" fill="none"/>
<text x="1057.6" y="199.5" font-size="7.7" fill="#1e1e1e" textLength="98.4" lengthAdjust="spacingAndGlyphs" stroke="#1e1e1e" stroke-width="0.12">267 YE 0.8 AIR FILTER/ENGINE MALFUNCTION</text>
<path d="M1159.0 196.6L1372.0 196.6" stroke="#1c1c1c" stroke-width="1.0" fill="none"/>
<path d="M1375.3 192.5Q1369.0 196.6 1375.3 200.7" fill="none" stroke="#1c1c1c" stroke-width="1.2"/>
<ellipse cx="1375.2" cy="196.6" rx="1.35" ry="2.0" fill="#fff" stroke="#1c1c1c" stroke-width="1.05"/>
<text x="1360.0" y="192.4" font-size="4.0" fill="#4a4a4a" textLength="12.0" lengthAdjust="spacingAndGlyphs">X-C23-11</text>
<text x="1382.7" y="196.9" font-size="7.5" fill="#1e1e1e" textLength="75.1" lengthAdjust="spacingAndGlyphs" stroke="#1e1e1e" stroke-width="0.12">AIR FILTER/ENGINE MALFUNCTION</text>
<text x="995.1" y="221.1" font-size="7.8" fill="#1e1e1e" textLength="18.7" lengthAdjust="spacingAndGlyphs" stroke="#1e1e1e" stroke-width="0.12">Sheet 18</text>
<text x="1019.0" y="221.1" font-size="7.8" fill="#1e1e1e" textLength="16.5" lengthAdjust="spacingAndGlyphs" stroke="#1e1e1e" stroke-width="0.12">WB-328</text>
<path d="M1038.2 216.8L1050.6 220.7L1038.2 224.6Z" fill="#fff" stroke="#1c1c1c" stroke-width="1.25"/>
<path d="M1050.6 220.7L1065.5 220.7" stroke="#1c1c1c" stroke-width="1.0" fill="none"/>
<text x="1068.0" y="223.6" font-size="7.7" fill="#1e1e1e" textLength="77.9" lengthAdjust="spacingAndGlyphs" stroke="#1e1e1e" stroke-width="0.12">328 YE 0.8 SEAT SW CLUSTER INPUT</text>
<path d="M1148.6 220.7L1372.0 220.7" stroke="#1c1c1c" stroke-width="1.0" fill="none"/>
<path d="M1375.3 216.6Q1369.0 220.7 1375.3 224.8" fill="none" stroke="#1c1c1c" stroke-width="1.2"/>
<ellipse cx="1375.2" cy="220.7" rx="1.35" ry="2.0" fill="#fff" stroke="#1c1c1c" stroke-width="1.05"/>
<text x="1360.0" y="216.5" font-size="4.0" fill="#4a4a4a" textLength="12.0" lengthAdjust="spacingAndGlyphs">X-C23-12</text>
<text x="1382.0" y="221.0" font-size="7.5" fill="#1e1e1e" textLength="65.3" lengthAdjust="spacingAndGlyphs" stroke="#1e1e1e" stroke-width="0.12">SEAT SWITCH CLUSTER INPUT</text>
<text x="995.1" y="245.0" font-size="7.8" fill="#1e1e1e" textLength="18.7" lengthAdjust="spacingAndGlyphs" stroke="#1e1e1e" stroke-width="0.12">Sheet 14</text>
<text x="1017.6" y="245.0" font-size="7.8" fill="#1e1e1e" textLength="19.2" lengthAdjust="spacingAndGlyphs" stroke="#1e1e1e" stroke-width="0.12">WB-205C</text>
<path d="M1038.2 240.7L1050.6 244.6L1038.2 248.5Z" fill="#fff" stroke="#1c1c1c" stroke-width="1.25"/>
<path d="M1050.6 244.6L1060.7 244.6" stroke="#1c1c1c" stroke-width="1.0" fill="none"/>
<text x="1063.2" y="247.5" font-size="7.7" fill="#1e1e1e" textLength="87.5" lengthAdjust="spacingAndGlyphs" stroke="#1e1e1e" stroke-width="0.12">205C YE 0.8 REGENERATION INHIBIT SW</text>
<path d="M1153.2 244.6L1372.0 244.6" stroke="#1c1c1c" stroke-width="1.0" fill="none"/>
<path d="M1375.3 240.5Q1369.0 244.6 1375.3 248.7" fill="none" stroke="#1c1c1c" stroke-width="1.2"/>
<ellipse cx="1375.2" cy="244.6" rx="1.35" ry="2.0" fill="#fff" stroke="#1c1c1c" stroke-width="1.05"/>
<text x="1360.0" y="240.4" font-size="4.0" fill="#4a4a4a" textLength="12.0" lengthAdjust="spacingAndGlyphs">X-C23-13</text>
<text x="1382.0" y="244.9" font-size="7.5" fill="#1e1e1e" textLength="71.0" lengthAdjust="spacingAndGlyphs" stroke="#1e1e1e" stroke-width="0.12">REGENERATION INHIBIT SWITCH</text>
<text x="995.1" y="269.2" font-size="7.8" fill="#1e1e1e" textLength="18.7" lengthAdjust="spacingAndGlyphs" stroke="#1e1e1e" stroke-width="0.12">Sheet 12</text>
<text x="1019.0" y="269.2" font-size="7.8" fill="#1e1e1e" textLength="16.5" lengthAdjust="spacingAndGlyphs" stroke="#1e1e1e" stroke-width="0.12">WB-264</text>
<path d="M1038.2 264.9L1050.6 268.8L1038.2 272.7Z" fill="#fff" stroke="#1c1c1c" stroke-width="1.25"/>
<path d="M1050.6 268.8L1059.7 268.8" stroke="#1c1c1c" stroke-width="1.0" fill="none"/>
<text x="1062.2" y="271.7" font-size="7.7" fill="#1e1e1e" textLength="88.9" lengthAdjust="spacingAndGlyphs" stroke="#1e1e1e" stroke-width="0.12">264 YE 0.8 HYDRAULIC OIL TEMP SENDER</text>
<path d="M1153.9 268.8L1372.0 268.8" stroke="#1c1c1c" stroke-width="1.0" fill="none"/>
<path d="M1375.3 264.7Q1369.0 268.8 1375.3 272.9" fill="none" stroke="#1c1c1c" stroke-width="1.2"/>
<ellipse cx="1375.2" cy="268.8" rx="1.35" ry="2.0" fill="#fff" stroke="#1c1c1c" stroke-width="1.05"/>
<text x="1360.0" y="264.6" font-size="4.0" fill="#4a4a4a" textLength="12.0" lengthAdjust="spacingAndGlyphs">X-C23-16</text>
<text x="1382.0" y="269.1" font-size="7.5" fill="#1e1e1e" textLength="65.3" lengthAdjust="spacingAndGlyphs" stroke="#1e1e1e" stroke-width="0.12">HYDRAULIC OIL TEMP SENDER</text>
<text x="995.1" y="293.4" font-size="7.8" fill="#1e1e1e" textLength="18.7" lengthAdjust="spacingAndGlyphs" stroke="#1e1e1e" stroke-width="0.12">Sheet 25</text>
<text x="1019.0" y="293.4" font-size="7.8" fill="#1e1e1e" textLength="16.5" lengthAdjust="spacingAndGlyphs" stroke="#1e1e1e" stroke-width="0.12">WB-250</text>
<path d="M1038.2 289.1L1050.6 293.0L1038.2 296.9Z" fill="#fff" stroke="#1c1c1c" stroke-width="1.25"/>
<path d="M1050.6 293.0L1073.7 293.0" stroke="#1c1c1c" stroke-width="1.0" fill="none"/>
<text x="1075.9" y="295.9" font-size="7.7" fill="#1e1e1e" textLength="62.0" lengthAdjust="spacingAndGlyphs" stroke="#1e1e1e" stroke-width="0.12">250 YE 0.8 DOOR SW SIGNAL</text>
<text x="995.1" y="325.4" font-size="7.8" fill="#1e1e1e" textLength="18.7" lengthAdjust="spacingAndGlyphs" stroke="#1e1e1e" stroke-width="0.12">Sheet 25</text>
<text x="1019.0" y="325.4" font-size="7.8" fill="#1e1e1e" textLength="16.5" lengthAdjust="spacingAndGlyphs" stroke="#1e1e1e" stroke-width="0.12">WB-220</text>
<path d="M1038.2 321.1L1050.6 325.0L1038.2 328.9Z" fill="#fff" stroke="#1c1c1c" stroke-width="1.25"/>
<path d="M1050.6 325.0L1073.7 325.0" stroke="#1c1c1c" stroke-width="1.0" fill="none"/>
<text x="1075.9" y="327.9" font-size="7.7" fill="#1e1e1e" textLength="62.0" lengthAdjust="spacingAndGlyphs" stroke="#1e1e1e" stroke-width="0.12">220 YE 0.8 DOOR SW BYPASS</text>
<path d="M1140.6 293.0L1198.5 293.0L1209.6 309.2L1198.5 325.0L1140.6 325.0" stroke="#1c1c1c" stroke-width="1.0" fill="none" stroke-linejoin="miter"/>
<path d="M1209.6 309.2L1256.3 309.2" stroke="#1c1c1c" stroke-width="1.0" fill="none"/>
<circle cx="1209.6" cy="309.2" r="1.5" fill="#4a4a4a"/>
<text x="1211.0" y="304.8" font-size="6.8" fill="#1e1e1e" textLength="14.4" lengthAdjust="spacingAndGlyphs" stroke="#1e1e1e" stroke-width="0.12">SP-093</text>
<text x="1258.4" y="312.1" font-size="7.7" fill="#1e1e1e" textLength="61.6" lengthAdjust="spacingAndGlyphs" stroke="#1e1e1e" stroke-width="0.12">251 YE 0.8 DOOR SW SIGNAL</text>
<path d="M1323.0 309.2L1372.0 309.2" stroke="#1c1c1c" stroke-width="1.0" fill="none"/>
<path d="M1375.3 305.1Q1369.0 309.2 1375.3 313.3" fill="none" stroke="#1c1c1c" stroke-width="1.2"/>
<ellipse cx="1375.2" cy="309.2" rx="1.35" ry="2.0" fill="#fff" stroke="#1c1c1c" stroke-width="1.05"/>
<text x="1360.0" y="305.0" font-size="4.0" fill="#4a4a4a" textLength="12.0" lengthAdjust="spacingAndGlyphs">X-C23-19</text>
<text x="1382.0" y="309.3" font-size="7.5" fill="#1e1e1e" textLength="48.5" lengthAdjust="spacingAndGlyphs" stroke="#1e1e1e" stroke-width="0.12">DOOR SWITCH SIGNAL</text>
<path d="M1500.2 120.4Q1506.5 124.5 1500.2 128.6" fill="none" stroke="#1c1c1c" stroke-width="1.2"/>
<ellipse cx="1500.3" cy="124.5" rx="1.35" ry="2.0" fill="#fff" stroke="#1c1c1c" stroke-width="1.05"/>
<text x="1503.0" y="120.2" font-size="4.0" fill="#4a4a4a" textLength="12.2" lengthAdjust="spacingAndGlyphs">X-C23-24</text>
<text x="1450.0" y="124.8" font-size="7.5" fill="#1e1e1e" textLength="43.5" lengthAdjust="spacingAndGlyphs" stroke="#1e1e1e" stroke-width="0.12">FUEL LEVEL SENDER</text>
<path d="M1504.0 124.3L1720.5 124.3" stroke="#1c1c1c" stroke-width="1.0" fill="none"/>
<text x="1723.5" y="127.2" font-size="7.7" fill="#1e1e1e" textLength="67.0" lengthAdjust="spacingAndGlyphs" stroke="#1e1e1e" stroke-width="0.12">234 YE 0.8 FUEL LEVEL SENDER</text>
<path d="M1792.9 124.3L1831.0 124.3" stroke="#1c1c1c" stroke-width="1.0" fill="none"/>
<path d="M1843.2 120.4L1831.0 124.3L1843.2 128.2Z" fill="#fff" stroke="#1c1c1c" stroke-width="1.25"/>
<text x="1846.2" y="124.7" font-size="7.8" fill="#1e1e1e" textLength="15.8" lengthAdjust="spacingAndGlyphs" stroke="#1e1e1e" stroke-width="0.12">WB-234</text>
<text x="1867.8" y="124.7" font-size="7.8" fill="#1e1e1e" textLength="18.2" lengthAdjust="spacingAndGlyphs" stroke="#1e1e1e" stroke-width="0.12">Sheet 12</text>
<path d="M1500.2 176.3Q1506.5 180.4 1500.2 184.5" fill="none" stroke="#1c1c1c" stroke-width="1.2"/>
<ellipse cx="1500.3" cy="180.4" rx="1.35" ry="2.0" fill="#fff" stroke="#1c1c1c" stroke-width="1.05"/>
<text x="1503.0" y="176.1" font-size="4.0" fill="#4a4a4a" textLength="12.2" lengthAdjust="spacingAndGlyphs">X-C23-29</text>
<text x="1437.4" y="180.7" font-size="7.5" fill="#1e1e1e" textLength="57.2" lengthAdjust="spacingAndGlyphs" stroke="#1e1e1e" stroke-width="0.12">ACCESSORY RELAY SIGNAL</text>
<path d="M1504.0 180.4L1506.0 180.4" stroke="#1c1c1c" stroke-width="1.0" fill="none"/>
<text x="1507.2" y="183.3" font-size="7.7" fill="#1e1e1e" textLength="83.1" lengthAdjust="spacingAndGlyphs" stroke="#1e1e1e" stroke-width="0.12">137 WH 0.8 ACCESSORY RELAY SIGNAL</text>
<path d="M1593.0 180.4L1597.6 180.4" stroke="#1c1c1c" stroke-width="1.0" fill="none"/>
<circle cx="1597.6" cy="180.4" r="1.35" fill="#1c1c1c"/>
<path d="M1596.0 180.4L1600.4 180.4" stroke="#1c1c1c" stroke-width="1.0" fill="none"/>
<path d="M1604.8 174.7Q1596.0 180.4 1604.8 186.1" stroke="#1c1c1c" stroke-width="1.2" fill="none"/>
<path d="M1609.2 180.4L1643.3 180.4" stroke="#1c1c1c" stroke-width="1.0" fill="none"/>
<circle cx="1609.2" cy="180.4" r="1.35" fill="#1c1c1c"/>
<circle cx="1614.9" cy="180.4" r="1.35" fill="#1c1c1c"/>
<circle cx="1637.2" cy="180.4" r="1.35" fill="#1c1c1c"/>
<circle cx="1643.3" cy="180.4" r="1.35" fill="#1c1c1c"/>
<path d="M1620.4 175.5L1631.0 180.4L1620.4 185.3Z" fill="#1c1c1c" stroke="#1c1c1c" stroke-width="0.6"/>
<path d="M1631.5 175.8L1631.5 185.0" stroke="#1c1c1c" stroke-width="1.1" fill="none"/>
<path d="M1647.3 174.7Q1656.1 180.4 1647.3 186.1" stroke="#1c1c1c" stroke-width="1.2" fill="none"/>
<circle cx="1654.4" cy="180.4" r="1.35" fill="#1c1c1c"/>
<path d="M1652.0 180.4L1658.6 180.4" stroke="#1c1c1c" stroke-width="1.0" fill="none"/>
<text x="1598.5" y="177.0" font-size="4.0" fill="#4a4a4a" text-anchor="middle">A</text>
<text x="1609.5" y="177.0" font-size="4.0" fill="#4a4a4a" text-anchor="middle">A</text>
<text x="1643.0" y="177.0" font-size="4.0" fill="#4a4a4a" text-anchor="middle">B</text>
<text x="1654.6" y="177.0" font-size="4.0" fill="#4a4a4a" text-anchor="middle">B</text>
<text x="1659.7" y="183.3" font-size="7.7" fill="#1e1e1e" textLength="24.2" lengthAdjust="spacingAndGlyphs" stroke="#1e1e1e" stroke-width="0.12">153 WH 0.8</text>
<path d="M1685.0 180.4L1694.4 180.4" stroke="#1c1c1c" stroke-width="1.0" fill="none"/>
<text x="1620.1" y="153.3" font-size="5.6" fill="#444" textLength="11.8" lengthAdjust="spacingAndGlyphs" stroke="#444" stroke-width="0.12">V-004</text>
<text x="1572.0" y="168.4" font-size="10.8" fill="#222" textLength="107.7" lengthAdjust="spacingAndGlyphs" stroke="#222" stroke-width="0.1">ACCESSORY BACKFEED DIODE</text>
<text x="1595.1" y="197.0" font-size="11.7" fill="#1e1e1e" textLength="16.2" lengthAdjust="spacingAndGlyphs" stroke="#1e1e1e" stroke-width="0.1">X-15</text>
<text x="1641.2" y="197.0" font-size="11.7" fill="#1e1e1e" textLength="15.8" lengthAdjust="spacingAndGlyphs" stroke="#1e1e1e" stroke-width="0.1">X-15</text>
<text x="1698.6" y="180.6" font-size="6.8" fill="#1e1e1e" textLength="14.3" lengthAdjust="spacingAndGlyphs" stroke="#1e1e1e" stroke-width="0.12">SP-009</text>
<path d="M1724.8 164.3L1694.4 164.3L1694.4 196.5L1699.6 196.5" stroke="#1c1c1c" stroke-width="1.0" fill="none" stroke-linejoin="miter"/>
<circle cx="1694.4" cy="180.4" r="1.6" fill="#4a4a4a"/>
<text x="1727.2" y="167.2" font-size="7.7" fill="#1e1e1e" textLength="59.6" lengthAdjust="spacingAndGlyphs" stroke="#1e1e1e" stroke-width="0.12">138 OR 0.8 KEY ACCESSORY</text>
<path d="M1789.7 164.3L1831.0 164.3" stroke="#1c1c1c" stroke-width="1.0" fill="none"/>
<path d="M1843.2 160.4L1831.0 164.3L1843.2 168.2Z" fill="#fff" stroke="#1c1c1c" stroke-width="1.25"/>
<text x="1845.9" y="165.1" font-size="7.8" fill="#1e1e1e" textLength="16.1" lengthAdjust="spacingAndGlyphs" stroke="#1e1e1e" stroke-width="0.12">WB-138</text>
<text x="1869.0" y="165.1" font-size="7.8" fill="#1e1e1e" textLength="15.8" lengthAdjust="spacingAndGlyphs" stroke="#1e1e1e" stroke-width="0.12">Sheet 3</text>
<text x="1702.9" y="199.4" font-size="7.7" fill="#1e1e1e" textLength="119.1" lengthAdjust="spacingAndGlyphs" stroke="#1e1e1e" stroke-width="0.12">175 WH 0.8 EH ACC RELAY CHASSIS INTERFACE SIGNAL</text>
<path d="M1825.7 196.5L1831.0 196.5" stroke="#1c1c1c" stroke-width="1.0" fill="none"/>
<path d="M1831.0 192.6L1843.2 196.5L1831.0 200.4Z" fill="#fff" stroke="#1c1c1c" stroke-width="1.25"/>
<text x="1845.9" y="197.1" font-size="7.8" fill="#1e1e1e" textLength="16.1" lengthAdjust="spacingAndGlyphs" stroke="#1e1e1e" stroke-width="0.12">WB-175</text>
<text x="1867.7" y="197.1" font-size="7.8" fill="#1e1e1e" textLength="18.3" lengthAdjust="spacingAndGlyphs" stroke="#1e1e1e" stroke-width="0.12">Sheet 12</text>
<path d="M1500.2 232.5Q1506.5 236.6 1500.2 240.7" fill="none" stroke="#1c1c1c" stroke-width="1.2"/>
<ellipse cx="1500.3" cy="236.6" rx="1.35" ry="2.0" fill="#fff" stroke="#1c1c1c" stroke-width="1.05"/>
<text x="1503.0" y="232.3" font-size="4.0" fill="#4a4a4a" textLength="12.2" lengthAdjust="spacingAndGlyphs">X-C23-20</text>
<text x="1408.8" y="236.9" font-size="7.5" fill="#1e1e1e" textLength="85.8" lengthAdjust="spacingAndGlyphs" stroke="#1e1e1e" stroke-width="0.12">HYDRAULIC LOADER INTERLOCK SIGNAL</text>
<path d="M1504.0 236.6L1697.5 236.6" stroke="#1c1c1c" stroke-width="1.0" fill="none"/>
<text x="1700.5" y="239.5" font-size="7.7" fill="#1e1e1e" textLength="112.5" lengthAdjust="spacingAndGlyphs" stroke="#1e1e1e" stroke-width="0.12">303 WH 0.8 HYDRAULIC LOADER INTERLOCK SIGNAL</text>
<path d="M1816.7 236.6L1831.0 236.6" stroke="#1c1c1c" stroke-width="1.0" fill="none"/>
<path d="M1843.2 232.7L1831.0 236.6L1843.2 240.5Z" fill="#fff" stroke="#1c1c1c" stroke-width="1.25"/>
<text x="1845.9" y="237.2" font-size="7.8" fill="#1e1e1e" textLength="16.1" lengthAdjust="spacingAndGlyphs" stroke="#1e1e1e" stroke-width="0.12">WB-303</text>
<text x="1867.7" y="237.2" font-size="7.8" fill="#1e1e1e" textLength="18.3" lengthAdjust="spacingAndGlyphs" stroke="#1e1e1e" stroke-width="0.12">Sheet 12</text>
<path d="M1500.2 256.7Q1506.5 260.8 1500.2 264.9" fill="none" stroke="#1c1c1c" stroke-width="1.2"/>
<ellipse cx="1500.3" cy="260.8" rx="1.35" ry="2.0" fill="#fff" stroke="#1c1c1c" stroke-width="1.05"/>
<text x="1503.0" y="256.5" font-size="4.0" fill="#4a4a4a" textLength="12.2" lengthAdjust="spacingAndGlyphs">X-C23-32</text>
<text x="1448.7" y="261.1" font-size="7.5" fill="#1e1e1e" textLength="45.9" lengthAdjust="spacingAndGlyphs" stroke="#1e1e1e" stroke-width="0.12">START RELAY SIGNAL</text>
<path d="M1504.0 260.8L1718.4 260.8" stroke="#1c1c1c" stroke-width="1.0" fill="none"/>
<text x="1720.6" y="263.7" font-size="7.7" fill="#1e1e1e" textLength="72.3" lengthAdjust="spacingAndGlyphs" stroke="#1e1e1e" stroke-width="0.12">622 WH 0.8 START RELAY SIGNAL</text>
<path d="M1795.8 260.8L1831.0 260.8" stroke="#1c1c1c" stroke-width="1.0" fill="none"/>
<path d="M1831.0 256.9L1843.2 260.8L1831.0 264.7Z" fill="#fff" stroke="#1c1c1c" stroke-width="1.25"/>
<text x="1845.9" y="261.4" font-size="7.8" fill="#1e1e1e" textLength="16.1" lengthAdjust="spacingAndGlyphs" stroke="#1e1e1e" stroke-width="0.12">WB-622</text>
<text x="1867.7" y="261.4" font-size="7.8" fill="#1e1e1e" textLength="18.3" lengthAdjust="spacingAndGlyphs" stroke="#1e1e1e" stroke-width="0.12">Sheet 12</text>
<path d="M1500.2 288.9Q1506.5 293.0 1500.2 297.1" fill="none" stroke="#1c1c1c" stroke-width="1.2"/>
<ellipse cx="1500.3" cy="293.0" rx="1.35" ry="2.0" fill="#fff" stroke="#1c1c1c" stroke-width="1.05"/>
<text x="1503.0" y="288.7" font-size="4.0" fill="#4a4a4a" textLength="12.2" lengthAdjust="spacingAndGlyphs">X-C23-33</text>
<text x="1435.7" y="293.3" font-size="7.5" fill="#1e1e1e" textLength="60.6" lengthAdjust="spacingAndGlyphs" stroke="#1e1e1e" stroke-width="0.12">MAIN POWER RELAY SIGNAL</text>
<path d="M1504.0 293.0L1711.6 293.0" stroke="#1c1c1c" stroke-width="1.0" fill="none"/>
<text x="1713.8" y="295.9" font-size="7.7" fill="#1e1e1e" textLength="85.9" lengthAdjust="spacingAndGlyphs" stroke="#1e1e1e" stroke-width="0.12">133 OR 0.8 MAIN POWER RELAY SIGNAL</text>
<path d="M1802.6 293.0L1831.0 293.0" stroke="#1c1c1c" stroke-width="1.0" fill="none"/>
<path d="M1843.2 289.1L1831.0 293.0L1843.2 296.9Z" fill="#fff" stroke="#1c1c1c" stroke-width="1.25"/>
<text x="1845.9" y="293.6" font-size="7.8" fill="#1e1e1e" textLength="16.1" lengthAdjust="spacingAndGlyphs" stroke="#1e1e1e" stroke-width="0.12">WB-133</text>
<text x="1867.7" y="293.6" font-size="7.8" fill="#1e1e1e" textLength="18.3" lengthAdjust="spacingAndGlyphs" stroke="#1e1e1e" stroke-width="0.12">Sheet 12</text>
<path d="M1500.2 313.1Q1506.5 317.2 1500.2 321.3" fill="none" stroke="#1c1c1c" stroke-width="1.2"/>
<ellipse cx="1500.3" cy="317.2" rx="1.35" ry="2.0" fill="#fff" stroke="#1c1c1c" stroke-width="1.05"/>
<text x="1503.0" y="312.9" font-size="4.0" fill="#4a4a4a" textLength="12.2" lengthAdjust="spacingAndGlyphs">X-C23-34</text>
<text x="1455.0" y="317.5" font-size="7.5" fill="#1e1e1e" textLength="39.6" lengthAdjust="spacingAndGlyphs" stroke="#1e1e1e" stroke-width="0.12">CLUSTER GROUND</text>
<path d="M1504.0 317.2L1701.7 317.2" stroke="#1c1c1c" stroke-width="1.0" fill="none"/>
<text x="1704.1" y="320.1" font-size="7.7" fill="#1e1e1e" textLength="105.8" lengthAdjust="spacingAndGlyphs" stroke="#1e1e1e" stroke-width="0.12">1011 BK/WH 0.8 INSTRUMENT CLUSTER GROUND</text>
<path d="M1813.0 317.2L1831.0 317.2" stroke="#1c1c1c" stroke-width="1.0" fill="none"/>
<path d="M1831.0 313.3L1843.2 317.2L1831.0 321.1Z" fill="#fff" stroke="#1c1c1c" stroke-width="1.25"/>
<text x="1844.6" y="317.7" font-size="7.8" fill="#1e1e1e" textLength="18.1" lengthAdjust="spacingAndGlyphs" stroke="#1e1e1e" stroke-width="0.12">GB-1011</text>
<text x="1869.0" y="317.7" font-size="7.8" fill="#1e1e1e" textLength="15.8" lengthAdjust="spacingAndGlyphs" stroke="#1e1e1e" stroke-width="0.12">Sheet 4</text>
<text x="4.9" y="396.3" font-size="7.7" fill="#1e1e1e" text-anchor="end" transform="translate(4.9 0) scale(0.58 1) translate(-4.9 0)" stroke="#1e1e1e" stroke-width="0.12">SPEAKER</text>
<path d="M7.2 393.3L15.0 393.3" stroke="#1c1c1c" stroke-width="1.0" fill="none"/>
<path d="M14.6 389.2L27.1 393.3L14.6 397.4Z" fill="#fff" stroke="#1c1c1c" stroke-width="1.25"/>
<text x="30.3" y="393.7" font-size="7.8" fill="#1e1e1e" textLength="17.3" lengthAdjust="spacingAndGlyphs" stroke="#1e1e1e" stroke-width="0.12">WB-756</text>
<text x="53.1" y="393.7" font-size="7.8" fill="#1e1e1e" textLength="19.5" lengthAdjust="spacingAndGlyphs" stroke="#1e1e1e" stroke-width="0.12">Sheet 18</text>
<text x="2.0" y="430.5" font-size="7.7" fill="#1e1e1e" text-anchor="end" transform="translate(2.0 0) scale(0.58 1) translate(-2.0 0)" stroke="#1e1e1e" stroke-width="0.12">SPEAKER</text>
<path d="M4.7 427.5L15.0 427.5" stroke="#1c1c1c" stroke-width="1.0" fill="none"/>
<path d="M14.6 423.4L27.1 427.5L14.6 431.6Z" fill="#fff" stroke="#1c1c1c" stroke-width="1.25"/>
<text x="30.3" y="427.8" font-size="7.8" fill="#1e1e1e" textLength="17.3" lengthAdjust="spacingAndGlyphs" stroke="#1e1e1e" stroke-width="0.12">WB-405</text>
<text x="53.1" y="427.8" font-size="7.8" fill="#1e1e1e" textLength="19.5" lengthAdjust="spacingAndGlyphs" stroke="#1e1e1e" stroke-width="0.12">Sheet 15</text>
<path d="M0.0 453.4L15.0 453.4" stroke="#1a9ad7" stroke-width="1.0" fill="none"/>
<path d="M14.6 449.1L27.1 453.4L14.6 457.7Z" fill="#1a9ad7" stroke="#1a9ad7" stroke-width="0.6"/>
<text x="30.3" y="453.7" font-size="7.8" fill="#1e1e1e" textLength="17.3" lengthAdjust="spacingAndGlyphs" stroke="#1e1e1e" stroke-width="0.12">WB-143</text>
<text x="53.1" y="453.7" font-size="7.8" fill="#1e1e1e" textLength="19.5" lengthAdjust="spacingAndGlyphs" stroke="#1e1e1e" stroke-width="0.12">Sheet 27</text>
<text x="8.0" y="651.3" font-size="7.7" fill="#1e1e1e" text-anchor="end" transform="translate(8.0 0) scale(0.58 1) translate(-8.0 0)" stroke="#1e1e1e" stroke-width="0.12">RADIO POWER</text>
<text x="10.0" y="677.2" font-size="7.7" fill="#1e1e1e" text-anchor="end" transform="translate(10.0 0) scale(0.58 1) translate(-10.0 0)" stroke="#1e1e1e" stroke-width="0.12">RADIO GROUND</text>
<text x="32.6" y="703.2" font-size="7.7" fill="#1e1e1e" text-anchor="end" transform="translate(32.6 0) scale(0.58 1) translate(-32.6 0)" stroke="#1e1e1e" stroke-width="0.12">RADIO LEFT SPEAKER (+)</text>
<text x="33.6" y="728.6" font-size="7.7" fill="#1e1e1e" text-anchor="end" transform="translate(33.6 0) scale(0.58 1) translate(-33.6 0)" stroke="#1e1e1e" stroke-width="0.12">RADIO RIGHT SPEAKER (-)</text>
<text x="34.2" y="754.6" font-size="7.7" fill="#1e1e1e" text-anchor="end" transform="translate(34.2 0) scale(0.58 1) translate(-34.2 0)" stroke="#1e1e1e" stroke-width="0.12">RADIO RIGHT SPEAKER (+)</text>
<text x="32.0" y="780.3" font-size="7.7" fill="#1e1e1e" text-anchor="end" transform="translate(32.0 0) scale(0.58 1) translate(-32.0 0)" stroke="#1e1e1e" stroke-width="0.12">RADIO LEFT SPEAKER (-)</text>
<path d="M0.0 931.1L23.0 931.1" stroke="#1c1c1c" stroke-width="1.0" fill="none"/>
<path d="M22.7 927.2L35.1 931.1L22.7 935.0Z" fill="#fff" stroke="#1c1c1c" stroke-width="1.25"/>
<text x="38.9" y="931.5" font-size="7.8" fill="#1e1e1e" textLength="16.2" lengthAdjust="spacingAndGlyphs" stroke="#1e1e1e" stroke-width="0.12">GB-955</text>
<text x="62.5" y="931.5" font-size="7.8" fill="#1e1e1e" textLength="16.8" lengthAdjust="spacingAndGlyphs" stroke="#1e1e1e" stroke-width="0.12">Sheet 4</text>
<text x="661.6" y="524.7" font-size="14.2" fill="#222" textLength="122.4" lengthAdjust="spacingAndGlyphs">AUX ELEC ON/OFF SWITCH</text>
<text x="741.1" y="555.3" font-size="21.5" fill="#222" textLength="42.6" lengthAdjust="spacingAndGlyphs">X-401</text>
<path d="M737.8 562.6H787.7" fill="none" stroke="#222" stroke-width="1.15" stroke-dasharray="5.9 4.3"/>
<path d="M784.2 562.6H788.3" fill="none" stroke="#222" stroke-width="1.15"/>
<path d="M737.8 667.0H787.7" fill="none" stroke="#222" stroke-width="1.15" stroke-dasharray="5.9 4.3"/>
<path d="M784.2 667.0H788.3" fill="none" stroke="#222" stroke-width="1.15"/>
<path d="M738.4 562.4V667.2" fill="none" stroke="#222" stroke-width="1.15" stroke-dasharray="5.8 6.75" stroke-dashoffset="0.9"/>
<path d="M787.7 562.4V667.2" fill="none" stroke="#222" stroke-width="1.15" stroke-dasharray="5.8 6.75" stroke-dashoffset="0.9"/>
<text x="245.2" y="585.2" font-size="13.8" fill="#222" textLength="38.8" lengthAdjust="spacingAndGlyphs" stroke="#222" stroke-width="0.1">Sheet 14</text>
<text x="295.7" y="585.2" font-size="13.8" fill="#222" textLength="35.3" lengthAdjust="spacingAndGlyphs" stroke="#222" stroke-width="0.1">WB-129</text>
<path d="M337.6 576.8L361.5 584.6L337.6 592.4Z" fill="#0aa653" stroke="#0aa653" stroke-width="0.6"/>
<path d="M361.0 584.6L426.6 584.6" stroke="#0aa653" stroke-width="1.0" fill="none"/>
<circle cx="362.5" cy="584.6" r="1.0" fill="#0aa653"/>
<text x="432.0" y="590.8" font-size="13.8" fill="#222" textLength="165.6" lengthAdjust="spacingAndGlyphs" stroke="#222" stroke-width="0.1">129 OR 1.0 AUX ELEC ON/OFF SW IN</text>
<path d="M603.3 584.6L749.0 584.6" stroke="#0aa653" stroke-width="1.0" fill="none"/>
<rect x="756.9" y="581" width="12" height="7.2" fill="#0aa653"/>
<path d="M752.0 584.6L757.0 584.6" stroke="#0aa653" stroke-width="1.0" fill="none"/>
<circle cx="750.7" cy="584.7" r="1.7" fill="#fff" stroke="#0aa653" stroke-width="1"/>
<circle cx="775.1" cy="584.7" r="1.5" fill="#fff" stroke="#111" stroke-width="1.2"/>
<text x="750.6" y="577.4" font-size="7.3" fill="#333" text-anchor="middle" stroke="#333" stroke-width="0.12">A</text>
<text x="775.2" y="577.4" font-size="7.3" fill="#333" text-anchor="middle" stroke="#333" stroke-width="0.12">A</text>
<text x="245.2" y="644.6" font-size="13.8" fill="#222" textLength="38.8" lengthAdjust="spacingAndGlyphs" stroke="#222" stroke-width="0.1">Sheet 14</text>
<text x="295.7" y="644.6" font-size="13.8" fill="#222" textLength="35.3" lengthAdjust="spacingAndGlyphs" stroke="#222" stroke-width="0.1">WB-856</text>
<path d="M337.9 637.2L361.5 644.6L337.9 652.0Z" fill="#fff" stroke="#1c1c1c" stroke-width="1.1"/>
<path d="M361.5 644.6L412.4 644.6" stroke="#1c1c1c" stroke-width="1.0" fill="none"/>
<circle cx="362.5" cy="644.6" r="1.0" fill="#1c1c1c"/>
<text x="418.7" y="650.8" font-size="13.8" fill="#222" textLength="191.8" lengthAdjust="spacingAndGlyphs" stroke="#222" stroke-width="0.1">856 WH 1.0 AUX ELEC ON/OFF SW SIGNAL</text>
<path d="M616.5 644.6L749.0 644.6" stroke="#1c1c1c" stroke-width="1.0" fill="none"/>
<rect x="756.9" y="641" width="12" height="7.2" fill="#1c1c1c"/>
<path d="M752.0 644.6L757.0 644.6" stroke="#1c1c1c" stroke-width="1.0" fill="none"/>
<circle cx="750.7" cy="644.7" r="1.7" fill="#fff" stroke="#111" stroke-width="1"/>
<circle cx="775.1" cy="644.7" r="1.5" fill="#fff" stroke="#111" stroke-width="1.2"/>
<text x="750.6" y="637.0" font-size="7.3" fill="#333" text-anchor="middle" stroke="#333" stroke-width="0.12">B</text>
<text x="775.2" y="637.0" font-size="7.3" fill="#333" text-anchor="middle" stroke="#333" stroke-width="0.12">B</text>
<text x="317.2" y="702.9" font-size="24.5" fill="#1d1d1d" textLength="461.2" lengthAdjust="spacingAndGlyphs">CONNECTS TO RIGHT CONTROL HANDLE SHEET 17.</text>
<text x="1362.1" y="438.4" font-size="32" fill="#231f20" textLength="169.3" lengthAdjust="spacingAndGlyphs" stroke="#231f20" stroke-width="0.35">L218/ L220</text>
<text x="1255.9" y="483.0" font-size="32" fill="#231f20" textLength="381.3" lengthAdjust="spacingAndGlyphs" stroke="#231f20" stroke-width="0.35">ISM TIER 4 EH MACHINES</text>
<text x="1259.8" y="527.7" font-size="32" fill="#231f20" textLength="374.7" lengthAdjust="spacingAndGlyphs" stroke="#231f20" stroke-width="0.35">ELECTRICAL SCHEMATIC</text>
<text x="1335.6" y="569.6" font-size="32" fill="#231f20" textLength="222.2" lengthAdjust="spacingAndGlyphs" stroke="#231f20" stroke-width="0.35">RAC 47547375</text>
<text x="1251.2" y="681.9" font-size="31.5" fill="#231f20" textLength="305.5" lengthAdjust="spacingAndGlyphs" stroke="#231f20" stroke-width="0.35">UNSWITCHED BATTERY</text>
<text x="1185.8" y="722.0" font-size="31.5" fill="#231f20" textLength="369.7" lengthAdjust="spacingAndGlyphs" stroke="#231f20" stroke-width="0.35">MAIN POWER FUSE BLOCK 1</text>
<text x="1097.5" y="765.2" font-size="31.5" fill="#231f20" textLength="459.2" lengthAdjust="spacingAndGlyphs" stroke="#231f20" stroke-width="0.35">ACCESSORY POWER DISTRIBUTION</text>
<rect x="1594.9" y="661.1" width="132.1" height="23.4" fill="#ea3b44"/>
<rect x="1594.9" y="701.3" width="132.1" height="23.4" fill="#089bdb"/>
<rect x="1594.9" y="742.3" width="132.1" height="23.4" fill="#00a550"/>
<text x="1680.1" y="951.2" font-size="17.2" fill="#231f20" textLength="164.1" lengthAdjust="spacingAndGlyphs" stroke="#231f20" stroke-width="0.2">RAC 47547375 S1S2</text>
<rect x="0" y="981.8" width="1902" height="46.2" fill="#f0f0f0"/>
<rect x="0" y="981.7" width="1902" height="0.9" fill="#fafafa"/>
<rect x="919.8" y="983.4" width="966.2" height="12.3" fill="#c9c9c9"/>
<rect x="0" y="982.8" width="8.2" height="12.8" fill="#e2e2e2"/>
<path d="M0 983.1H8.4V995.7" fill="none" stroke="#555" stroke-width="0.9"/>
<path d="M19.9 987.3L15.2 990.6L19.9 993.9" fill="none" stroke="#404040" stroke-width="2.2"/>
<path d="M1892.3 987.3L1897 990.6L1892.3 993.9" fill="none" stroke="#404040" stroke-width="2.2"/>
<rect x="0" y="1025.9" width="1902" height="2.1" fill="#3c3c3c"/>
<rect x="261.3" y="1025.9" width="35.7" height="2.1" fill="#7a7a7a"/>
<path d="M782.2 1004.6L773.8 1011.3L782.2 1018Z" fill="#1a1a1a"/>
<rect x="784.0" y="1004.6" width="2.3" height="13.4" fill="#1a1a1a"/>
<path d="M808.4 1004.6L800.8 1011.3L808.4 1018Z" fill="#1a1a1a"/>
<rect x="820.6" y="1001.6" width="113.8" height="18.6" fill="#fff" stroke="#acacac" stroke-width="1"/>
<text x="825.5" y="1015.9" font-size="12.3" fill="#111" textLength="25.9" lengthAdjust="spacingAndGlyphs" stroke="none">2 / 3</text>
<path d="M924.7 1010.2H930.2L927.45 1013.1Z" fill="#1a1a1a"/>
<path d="M944 1004.6L951.4 1011.3L944 1018Z" fill="#1a1a1a"/>
<rect x="966.4" y="1004.6" width="2.3" height="13.4" fill="#1a1a1a"/>
<path d="M970.4 1004.6L978.9 1011.3L970.4 1018Z" fill="#1a1a1a"/>
<rect x="991.2" y="1004.4" width="6.6" height="1.6" fill="#3b6fb5"/>
<path d="M991.7 1006V1012.6H995.8" fill="none" stroke="#444" stroke-width="1"/>
<rect x="996.3" y="1011.2" width="9.8" height="8" fill="#fff" stroke="#444" stroke-width="1.1"/>
<rect x="996.3" y="1010.7" width="9.8" height="1.6" fill="#444"/>
<path d="M1006.2 1007.6H999.6M1002.4 1004.6L999.4 1007.6L1002.4 1010.4" fill="none" stroke="#3f8f74" stroke-width="1.5"/>
<rect x="1017.2" y="1004.6" width="9.8" height="8.6" fill="none" stroke="#c6c6c6" stroke-width="1.1"/>
<rect x="1022.6" y="1010.4" width="10" height="8.6" fill="#f0f0f0" stroke="#c0c4cc" stroke-width="1.1"/>
<rect x="1022.6" y="1009.9" width="10" height="1.5" fill="#b8c4d8"/>
<path d="M1017 1016H1023M1020.4 1013.4L1023 1016L1020.4 1018.6" fill="none" stroke="#b5cfc4" stroke-width="1.3"/>
<rect x="1578.1" y="1003" width="22.8" height="17.8" fill="#c3d5f0"/>
<rect x="1583.7" y="1005.8" width="9.6" height="12.3" fill="#fff" stroke="#59606e" stroke-width="1.15"/>
<rect x="1585.2" y="1008.0" width="6.6" height="0.9" fill="#6a6a6a"/>
<rect x="1585.2" y="1011.0" width="6.6" height="0.9" fill="#6a6a6a"/>
<rect x="1585.2" y="1014.1" width="6.6" height="0.9" fill="#6a6a6a"/>
<rect x="1608.7" y="1004.7" width="9.7" height="8.4" fill="#fff" stroke="#6a6a6a" stroke-width="1.15"/>
<path d="M1608.7 1019.9V1015.9H1618.4V1019.9" fill="#fff" stroke="#6a6a6a" stroke-width="1.15"/>
<rect x="1610.2" y="1007.1" width="6.7" height="0.9" fill="#6a6a6a"/>
<rect x="1610.2" y="1010.0" width="6.7" height="0.9" fill="#6a6a6a"/>
<rect x="1610.2" y="1018.0" width="6.7" height="0.9" fill="#6a6a6a"/>
<rect x="1633.6" y="1005.8" width="5.6" height="11.5" fill="#fff" stroke="#6a6a6a" stroke-width="1.15"/>
<rect x="1635.1" y="1008.0" width="2.7" height="0.9" fill="#6a6a6a"/>
<rect x="1635.1" y="1011.0" width="2.7" height="0.9" fill="#6a6a6a"/>
<rect x="1635.1" y="1014.1" width="2.7" height="0.9" fill="#6a6a6a"/>
<rect x="1641.8" y="1005.8" width="5.6" height="11.5" fill="#fff" stroke="#6a6a6a" stroke-width="1.15"/>
<rect x="1643.3" y="1008.0" width="2.7" height="0.9" fill="#6a6a6a"/>
<rect x="1643.3" y="1011.0" width="2.7" height="0.9" fill="#6a6a6a"/>
<rect x="1643.3" y="1014.1" width="2.7" height="0.9" fill="#6a6a6a"/>
<rect x="1659" y="1004.7" width="6.1" height="8.4" fill="#fff"/><rect x="1667.7" y="1004.7" width="6.3" height="8.4" fill="#fff"/>
<rect x="1659" y="1015.9" width="6.1" height="4" fill="#fff"/><rect x="1667.7" y="1015.9" width="6.3" height="4" fill="#fff"/>
<path d="M1659 1004.7H1665.1V1013.1H1659M1674 1004.7H1667.7V1013.1H1674M1659 1015.9H1665.1V1019.9M1674 1015.9H1667.7V1019.9" fill="none" stroke="#6a6a6a" stroke-width="1.15"/>
<rect x="1659" y="1007.1" width="4.6" height="0.9" fill="#6a6a6a"/>
<rect x="1669.2" y="1007.1" width="4.8" height="0.9" fill="#6a6a6a"/>
<rect x="1659" y="1010.0" width="4.6" height="0.9" fill="#6a6a6a"/>
<rect x="1669.2" y="1010.0" width="4.8" height="0.9" fill="#6a6a6a"/>
<rect x="1659" y="1018.0" width="4.6" height="0.9" fill="#6a6a6a"/>
<rect x="1669.2" y="1018.0" width="4.8" height="0.9" fill="#6a6a6a"/>
<text x="1701.7" y="1016.0" font-size="12.3" fill="#2a2a2a" textLength="31.9" lengthAdjust="spacingAndGlyphs" stroke="none">100%</text>
<path d="M1757.8 1009.2H1763.4L1760.6 1012.2Z" fill="#1a1a1a"/>
<circle cx="1775.5" cy="1010.8" r="7.2" fill="#f6f6f6" stroke="#333" stroke-width="1"/>
<rect x="1771.3" y="1010.2" width="8.4" height="1.2" fill="#333"/>
<rect x="1790.2" y="1011.1" width="90.8" height="1" fill="#555"/>
<rect x="1833" y="1007.1" width="4" height="7.8" fill="#222"/>
<circle cx="1893.4" cy="1010.8" r="7.2" fill="#f6f6f6" stroke="#333" stroke-width="1"/>
<rect x="1889.2" y="1010.2" width="8.4" height="1.2" fill="#333"/>
<rect x="1892.8" y="1006.6" width="1.2" height="8.4" fill="#333"/>
</svg>
</body></html>
